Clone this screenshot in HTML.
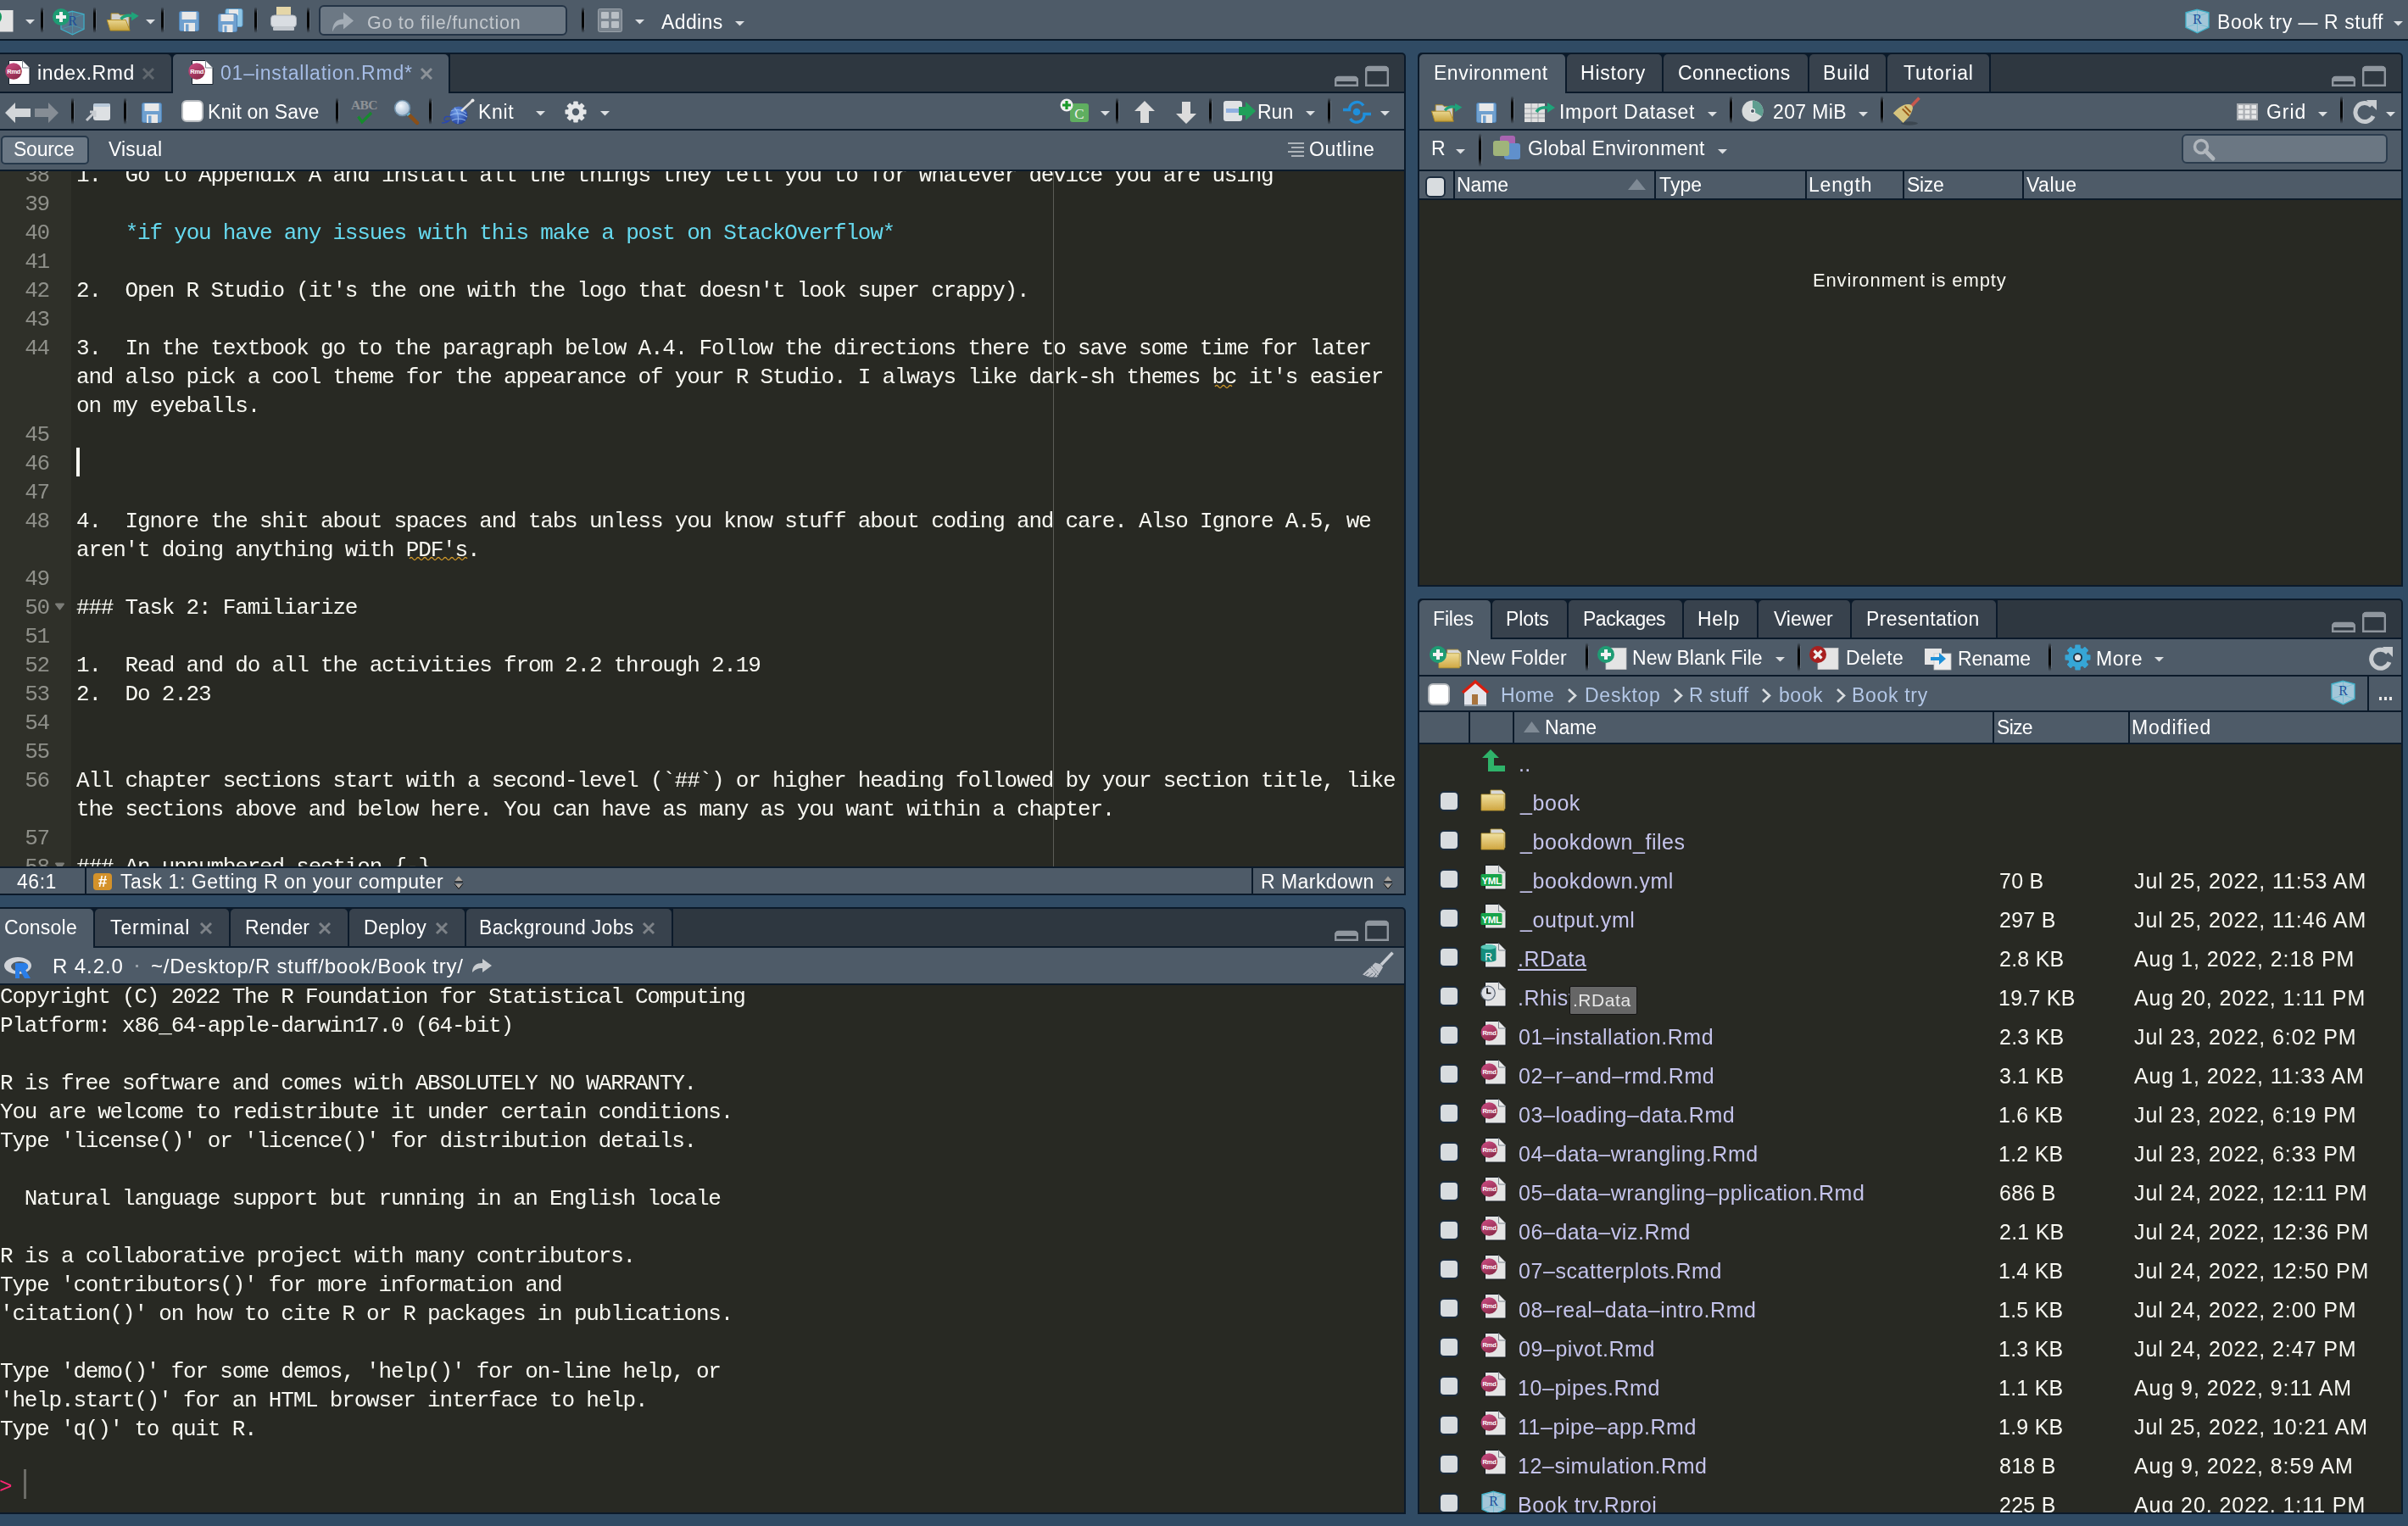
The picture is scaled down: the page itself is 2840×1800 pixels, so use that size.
<!DOCTYPE html>
<html><head><meta charset="utf-8"><style>
html,body{margin:0;padding:0}
body{width:2840px;height:1800px;position:relative;overflow:hidden;background:#304b64;font-family:"Liberation Sans",sans-serif}
.a{position:absolute}
svg.a{overflow:visible}
.t{position:absolute;white-space:pre;line-height:40px;font-family:"Liberation Sans",sans-serif;will-change:transform}
.m{position:absolute;white-space:pre;font-family:"Liberation Mono",monospace;font-size:26px;line-height:34px;letter-spacing:-1.2px;will-change:transform}
</style></head><body>
<svg width="0" height="0" style="position:absolute"><defs><linearGradient id="grmd" x1="0" y1="0" x2=".6" y2="1"><stop offset="0" stop-color="#cf4e86"/><stop offset="1" stop-color="#8e2c4c"/></linearGradient><linearGradient id="gfld" x1="0" y1="0" x2="0" y2="1"><stop offset="0" stop-color="#efe0a0"/><stop offset="1" stop-color="#d0a640"/></linearGradient></defs></svg>
<div class="a" style="left:0px;top:0px;width:2840px;height:46px;background:#4e5b68;"></div>
<div class="a" style="left:0px;top:46px;width:2840px;height:2px;background:#0b1a2a;"></div>
<div class="a" style="left:0px;top:62px;width:1658px;height:994px;background:#0b1a2a;border-top-right-radius:5px"></div>
<div class="a" style="left:531px;top:64px;width:1125px;height:44px;background:#2e3740;border-top-right-radius:3px"></div>
<div class="a" style="left:0px;top:64px;width:202px;height:44px;background:#38424d;border-top-right-radius:5px"></div>
<div class="a" style="left:204px;top:64px;width:325px;height:46px;background:#4e5b68;border-top-left-radius:5px;border-top-right-radius:5px"></div>
<div class="a" style="left:0px;top:110px;width:1656px;height:42px;background:#4e5b68;"></div>
<div class="a" style="left:0px;top:154px;width:1656px;height:46px;background:#4e5b68;"></div>
<div class="a" style="left:0px;top:202px;width:84px;height:820px;background:#2f3029;"></div>
<div class="a" style="left:84px;top:202px;width:1572px;height:820px;background:#282923;"></div>
<div class="a" style="left:0px;top:1024px;width:1656px;height:30px;background:#4e5b68;"></div>
<div class="a" style="left:100px;top:1024px;width:2px;height:30px;background:#0b1a2a;"></div>
<div class="a" style="left:1476px;top:1024px;width:2px;height:30px;background:#0b1a2a;"></div>
<div class="a" style="left:0px;top:1070px;width:1658px;height:716px;background:#0b1a2a;border-top-right-radius:5px"></div>
<div class="a" style="left:794px;top:1072px;width:862px;height:44px;background:#2e3740;border-top-right-radius:3px"></div>
<div class="a" style="left:0px;top:1072px;width:110px;height:46px;background:#4e5b68;border-top-right-radius:5px"></div>
<div class="a" style="left:112px;top:1072px;width:158px;height:44px;background:#38424d;border-top-left-radius:5px;border-top-right-radius:5px"></div>
<div class="a" style="left:272px;top:1072px;width:138px;height:44px;background:#38424d;border-top-left-radius:5px;border-top-right-radius:5px"></div>
<div class="a" style="left:412px;top:1072px;width:136px;height:44px;background:#38424d;border-top-left-radius:5px;border-top-right-radius:5px"></div>
<div class="a" style="left:550px;top:1072px;width:242px;height:44px;background:#38424d;border-top-left-radius:5px;border-top-right-radius:5px"></div>
<div class="a" style="left:0px;top:1118px;width:1656px;height:42px;background:#4e5b68;"></div>
<div class="a" style="left:0px;top:1162px;width:1656px;height:622px;background:#282923;"></div>
<div class="a" style="left:1672px;top:62px;width:1162px;height:630px;background:#0b1a2a;border-top-left-radius:5px;border-top-right-radius:5px"></div>
<div class="a" style="left:2348px;top:64px;width:484px;height:44px;background:#2e3740;border-top-right-radius:3px"></div>
<div class="a" style="left:1674px;top:64px;width:172px;height:46px;background:#4e5b68;border-top-left-radius:5px;border-top-right-radius:5px"></div>
<div class="a" style="left:1848px;top:64px;width:112px;height:44px;background:#38424d;border-top-left-radius:5px;border-top-right-radius:5px"></div>
<div class="a" style="left:1962px;top:64px;width:170px;height:44px;background:#38424d;border-top-left-radius:5px;border-top-right-radius:5px"></div>
<div class="a" style="left:2134px;top:64px;width:90px;height:44px;background:#38424d;border-top-left-radius:5px;border-top-right-radius:5px"></div>
<div class="a" style="left:2226px;top:64px;width:120px;height:44px;background:#38424d;border-top-left-radius:5px;border-top-right-radius:5px"></div>
<div class="a" style="left:1674px;top:110px;width:1158px;height:42px;background:#4e5b68;"></div>
<div class="a" style="left:1674px;top:154px;width:1158px;height:46px;background:#4e5b68;"></div>
<div class="a" style="left:1674px;top:202px;width:1158px;height:32px;background:#4e5b68;"></div>
<div class="a" style="left:1714px;top:202px;width:2px;height:32px;background:#0b1a2a;"></div>
<div class="a" style="left:1951px;top:202px;width:2px;height:32px;background:#0b1a2a;"></div>
<div class="a" style="left:2129px;top:202px;width:2px;height:32px;background:#0b1a2a;"></div>
<div class="a" style="left:2244px;top:202px;width:2px;height:32px;background:#0b1a2a;"></div>
<div class="a" style="left:2385px;top:202px;width:2px;height:32px;background:#0b1a2a;"></div>
<div class="a" style="left:1674px;top:236px;width:1158px;height:454px;background:#282923;"></div>
<div class="a" style="left:1672px;top:706px;width:1162px;height:1080px;background:#0b1a2a;border-top-left-radius:5px;border-top-right-radius:5px"></div>
<div class="a" style="left:2356px;top:708px;width:476px;height:44px;background:#2e3740;border-top-right-radius:3px"></div>
<div class="a" style="left:1674px;top:708px;width:84px;height:46px;background:#4e5b68;border-top-left-radius:5px;border-top-right-radius:5px"></div>
<div class="a" style="left:1760px;top:708px;width:88px;height:44px;background:#38424d;border-top-left-radius:5px;border-top-right-radius:5px"></div>
<div class="a" style="left:1850px;top:708px;width:134px;height:44px;background:#38424d;border-top-left-radius:5px;border-top-right-radius:5px"></div>
<div class="a" style="left:1986px;top:708px;width:86px;height:44px;background:#38424d;border-top-left-radius:5px;border-top-right-radius:5px"></div>
<div class="a" style="left:2074px;top:708px;width:108px;height:44px;background:#38424d;border-top-left-radius:5px;border-top-right-radius:5px"></div>
<div class="a" style="left:2184px;top:708px;width:170px;height:44px;background:#38424d;border-top-left-radius:5px;border-top-right-radius:5px"></div>
<div class="a" style="left:1674px;top:754px;width:1158px;height:42px;background:#4e5b68;"></div>
<div class="a" style="left:1674px;top:798px;width:1158px;height:40px;background:#4e5b68;"></div>
<div class="a" style="left:2792px;top:798px;width:2px;height:40px;background:#0b1a2a;"></div>
<div class="a" style="left:1674px;top:840px;width:1158px;height:36px;background:#4e5b68;"></div>
<div class="a" style="left:1732px;top:840px;width:2px;height:36px;background:#0b1a2a;"></div>
<div class="a" style="left:1784px;top:840px;width:2px;height:36px;background:#0b1a2a;"></div>
<div class="a" style="left:2350px;top:840px;width:2px;height:36px;background:#0b1a2a;"></div>
<div class="a" style="left:2510px;top:840px;width:2px;height:36px;background:#0b1a2a;"></div>
<div class="a" style="left:1674px;top:878px;width:1158px;height:906px;background:#282923;"></div>
<svg class="a" style="left:0px;top:12px;" width="16" height="26" viewBox="0 0 16 26"><rect x="-8" y="0" width="23.5" height="25.5" fill="#e4e4e4"/><circle cx="-7" cy="8" r="9" fill="#12955c"/></svg>
<svg class="a" style="left:30px;top:23px;" width="11" height="6" viewBox="0 0 11 6"><path d="M0 0H11L5.5 5.5Z" fill="#dcdfe2"/></svg>
<div class="a" style="left:48px;top:8px;width:3px;height:31px;background:linear-gradient(180deg,rgba(0,0,0,0),rgba(0,0,0,.95) 25%,rgba(0,0,0,.95) 75%,rgba(0,0,0,0));border-radius:2px"></div>
<div class="a" style="left:51px;top:12px;width:1px;height:23px;background:rgba(255,255,255,.12);"></div>
<svg class="a" style="left:71px;top:12px;" width="29" height="30" viewBox="0 0 30 30"><path d="M15 0.8L29 4.5v18L15 29.2 1 22.5v-18z" fill="#5d8aa8" fill-opacity=".55" stroke="#3fb0c8" stroke-width="1.3"/><path d="M15 0.8v28.4M1 4.5l14 4.5 14-4.5M1 22.5l14-4.5 14 4.5" stroke="#3fb0c8" stroke-width=".8" fill="none" opacity=".55"/><text x="15" y="18.6" font-family="Liberation Serif" font-size="16.5" fill="#1f4f9a" text-anchor="middle">R</text></svg>
<svg class="a" style="left:62px;top:10px;" width="20" height="20" viewBox="0 0 20 20"><circle cx="10" cy="10" r="10" fill="#1f9c74"/><path d="M10 4v12M4 10h12" stroke="#f2f2f2" stroke-width="4"/></svg>
<div class="a" style="left:110px;top:8px;width:3px;height:31px;background:linear-gradient(180deg,rgba(0,0,0,0),rgba(0,0,0,.95) 25%,rgba(0,0,0,.95) 75%,rgba(0,0,0,0));border-radius:2px"></div>
<div class="a" style="left:113px;top:12px;width:1px;height:23px;background:rgba(255,255,255,.12);"></div>
<svg class="a" style="left:124px;top:13px;" width="41" height="25" viewBox="0 0 40 26"><defs><linearGradient id="gf" x1="0" y1="0" x2="0" y2="1"><stop offset="0" stop-color="#e9d690"/><stop offset="1" stop-color="#c9a540"/></linearGradient></defs><path d="M6 3h9l2 2h11v18H6z" fill="#d0d0d0" stroke="#b08a20" stroke-width="1"/><path d="M1 11h23l5 13H5z" fill="url(#gf)" stroke="#b08a20" stroke-width="1"/><path d="M18 10c4-5 10-5 14-4" fill="none" stroke="#1fa37a" stroke-width="3.5"/><path d="M31 1l9 5-9 6z" fill="#1fa37a"/></svg>
<svg class="a" style="left:172px;top:23px;" width="11" height="6" viewBox="0 0 11 6"><path d="M0 0H11L5.5 5.5Z" fill="#dcdfe2"/></svg>
<div class="a" style="left:190px;top:8px;width:3px;height:31px;background:linear-gradient(180deg,rgba(0,0,0,0),rgba(0,0,0,.95) 25%,rgba(0,0,0,.95) 75%,rgba(0,0,0,0));border-radius:2px"></div>
<div class="a" style="left:193px;top:12px;width:1px;height:23px;background:rgba(255,255,255,.12);"></div>
<svg class="a" style="left:211px;top:13px;" width="24" height="24" viewBox="0 0 24 24"><rect x="0.5" y="0.5" width="23" height="23" rx="2" fill="#6fa0cf" stroke="#4f84b8"/><rect x="3.5" y="1" width="17" height="9" fill="#e8e8e8"/><rect x="6" y="14" width="13" height="10" fill="#e8e8e8"/><rect x="8" y="15.5" width="3.5" height="8.5" fill="#6fa0cf"/></svg>
<svg class="a" style="left:257px;top:10px;" width="30" height="28" viewBox="0 0 30 28"><rect x="9" y="0.5" width="20" height="21" rx="2" fill="#8fc6e6" stroke="#5a9ccc"/><rect x="13" y="1" width="11" height="7" fill="#e8e8e8"/><rect x="0.5" y="6.5" width="22" height="21" rx="2" fill="#6fa0cf" stroke="#4f84b8"/><rect x="3.5" y="7" width="15" height="8" fill="#e8e8e8"/><rect x="5.5" y="19" width="12" height="9" fill="#e8e8e8"/><rect x="7.5" y="20.5" width="3" height="7.5" fill="#6fa0cf"/></svg>
<div class="a" style="left:300px;top:8px;width:3px;height:31px;background:linear-gradient(180deg,rgba(0,0,0,0),rgba(0,0,0,.95) 25%,rgba(0,0,0,.95) 75%,rgba(0,0,0,0));border-radius:2px"></div>
<div class="a" style="left:303px;top:12px;width:1px;height:23px;background:rgba(255,255,255,.12);"></div>
<svg class="a" style="left:319px;top:8px;" width="31" height="29" viewBox="0 0 31 29"><rect x="7" y="0" width="17" height="12" fill="#e4d6a8"/><rect x="0.5" y="10" width="30" height="14" rx="4" fill="#d9dde2" stroke="#aab0b8"/><rect x="3" y="24" width="25" height="4" rx="1" fill="#c4c9cf"/></svg>
<div class="a" style="left:362px;top:8px;width:3px;height:31px;background:linear-gradient(180deg,rgba(0,0,0,0),rgba(0,0,0,.95) 25%,rgba(0,0,0,.95) 75%,rgba(0,0,0,0));border-radius:2px"></div>
<div class="a" style="left:365px;top:12px;width:1px;height:23px;background:rgba(255,255,255,.12);"></div>
<div class="a" style="left:376px;top:6px;width:293px;height:36px;background:#6c7884;border:2px solid #243446;border-radius:6px;box-sizing:border-box"></div>
<svg class="a" style="left:391px;top:12px;" width="26" height="26" viewBox="0 0 26 25"><path d="M1 25c0-10 5-15 13-15V2l12 10-12 10v-6c-7 0-10 3-13 9z" fill="#a3acb5"/></svg>
<div class="a" style="left:686px;top:8px;width:3px;height:31px;background:linear-gradient(180deg,rgba(0,0,0,0),rgba(0,0,0,.95) 25%,rgba(0,0,0,.95) 75%,rgba(0,0,0,0));border-radius:2px"></div>
<div class="a" style="left:689px;top:12px;width:1px;height:23px;background:rgba(255,255,255,.12);"></div>
<svg class="a" style="left:705px;top:10px;" width="29" height="28" viewBox="0 0 29 28"><rect x="0.5" y="0.5" width="28" height="27" rx="2" fill="#7a848e" stroke="#9aa2aa"/><rect x="4" y="4" width="9" height="8" rx="1" fill="#b9bfc5"/><rect x="16" y="4" width="9" height="8" rx="1" fill="#b9bfc5"/><rect x="4" y="15" width="9" height="8" rx="1" fill="#b9bfc5"/><rect x="16" y="15" width="9" height="8" rx="1" fill="#b9bfc5"/></svg>
<svg class="a" style="left:749px;top:23px;" width="11" height="6" viewBox="0 0 11 6"><path d="M0 0H11L5.5 5.5Z" fill="#dcdfe2"/></svg>
<svg class="a" style="left:867px;top:25px;" width="11" height="6" viewBox="0 0 11 6"><path d="M0 0H11L5.5 5.5Z" fill="#dcdfe2"/></svg>
<svg class="a" style="left:2577px;top:10px;" width="29" height="30" viewBox="0 0 30 30"><path d="M15 0.8L29 4.5v18L15 29.2 1 22.5v-18z" fill="#a3c6d8" fill-opacity="1" stroke="#3fb0c8" stroke-width="1.3"/><path d="M15 0.8v28.4M1 4.5l14 4.5 14-4.5M1 22.5l14-4.5 14 4.5" stroke="#3fb0c8" stroke-width=".8" fill="none" opacity=".55"/><text x="15" y="18.6" font-family="Liberation Serif" font-size="16.5" fill="#1f4f9a" text-anchor="middle">R</text></svg>
<svg class="a" style="left:2823px;top:25px;" width="11" height="6" viewBox="0 0 11 6"><path d="M0 0H11L5.5 5.5Z" fill="#dcdfe2"/></svg>
<svg class="a" style="left:6px;top:71px;" width="31" height="30" viewBox="0 0 31 30"><path d="M4.5 0.5h16l8.5 8.5v19.5H4.5z" fill="#ffffff" stroke="#18222e" stroke-width="1"/><path d="M20.5 0.5v8.5h8.5" fill="#ffffff" stroke="#7d858e" stroke-width="1"/><circle cx="10" cy="13" r="9.8" fill="url(#grmd)"/><text x="10.2" y="15.6" font-family="Liberation Sans" font-size="7.6" font-weight="bold" fill="#fff" text-anchor="middle" letter-spacing="-.3">Rmd</text></svg>
<svg class="a" style="left:168px;top:80px;" width="14" height="14" viewBox="0 0 14 14"><path d="M1 1l12 12M13 1L1 13" stroke="#60676e" stroke-width="3"/></svg>
<svg class="a" style="left:222px;top:71px;" width="31" height="30" viewBox="0 0 31 30"><path d="M4.5 0.5h16l8.5 8.5v19.5H4.5z" fill="#ffffff" stroke="#18222e" stroke-width="1"/><path d="M20.5 0.5v8.5h8.5" fill="#ffffff" stroke="#7d858e" stroke-width="1"/><circle cx="10" cy="13" r="9.8" fill="url(#grmd)"/><text x="10.2" y="15.6" font-family="Liberation Sans" font-size="7.6" font-weight="bold" fill="#fff" text-anchor="middle" letter-spacing="-.3">Rmd</text></svg>
<svg class="a" style="left:496px;top:80px;" width="14" height="14" viewBox="0 0 14 14"><path d="M1 1l12 12M13 1L1 13" stroke="#8c9298" stroke-width="3"/></svg>
<svg class="a" style="left:1574px;top:78px;" width="64" height="24" viewBox="0 0 64 24"><path d="M1.2 16.5a3.5 3.5 0 0 1 3.5-3.5h18.6a3.5 3.5 0 0 1 3.5 3.5v6.3H1.2z" fill="none" stroke="#8f969e" stroke-width="2.4"/><path d="M0 16.5a4.5 4.5 0 0 1 4.5-4.5h19a4.5 4.5 0 0 1 4.5 4.5v1.5H0z" fill="#8f969e"/><path d="M37.2 4.5a3.5 3.5 0 0 1 3.5-3.5h18.6a3.5 3.5 0 0 1 3.5 3.5v18.3H37.2z" fill="none" stroke="#8f969e" stroke-width="2.4"/><path d="M36 4.5A4.5 4.5 0 0 1 40.5 0h19A4.5 4.5 0 0 1 64 4.5V6H36z" fill="#8f969e"/></svg>
<svg class="a" style="left:6px;top:121px;" width="30" height="24" viewBox="0 0 30 24"><path d="M0 12L12 0v7h18v10H12v7z" fill="#d3d6d9"/></svg>
<svg class="a" style="left:41px;top:121px;" width="28" height="24" viewBox="0 0 28 24"><path d="M28 12L16 0v7H0v10h16v7z" fill="#868d95"/></svg>
<div class="a" style="left:84px;top:115px;width:3px;height:32px;background:linear-gradient(180deg,rgba(0,0,0,0),rgba(0,0,0,.95) 25%,rgba(0,0,0,.95) 75%,rgba(0,0,0,0));border-radius:2px"></div>
<div class="a" style="left:87px;top:119px;width:1px;height:24px;background:rgba(255,255,255,.12);"></div>
<svg class="a" style="left:101px;top:121px;" width="30" height="22" viewBox="0 0 30 22"><rect x="9" y="1" width="20" height="20" rx="3" fill="#dde0e3"/><rect x="9" y="1" width="20" height="4" rx="2" fill="#b8c8d8"/><path d="M1 21L11 11M5 11h6v6" stroke="#c7cbd0" stroke-width="3" fill="none"/></svg>
<div class="a" style="left:146px;top:115px;width:3px;height:32px;background:linear-gradient(180deg,rgba(0,0,0,0),rgba(0,0,0,.95) 25%,rgba(0,0,0,.95) 75%,rgba(0,0,0,0));border-radius:2px"></div>
<div class="a" style="left:149px;top:119px;width:1px;height:24px;background:rgba(255,255,255,.12);"></div>
<svg class="a" style="left:167px;top:121px;" width="24" height="24" viewBox="0 0 24 24"><rect x="0.5" y="0.5" width="23" height="23" rx="2" fill="#6fa0cf" stroke="#4f84b8"/><rect x="3.5" y="1" width="17" height="9" fill="#e8e8e8"/><rect x="6" y="14" width="13" height="10" fill="#e8e8e8"/><rect x="8" y="15.5" width="3.5" height="8.5" fill="#6fa0cf"/></svg>
<div class="a" style="left:214px;top:118px;width:26px;height:26px;background:#ffffff;border:2px solid #b8bcc0;border-radius:6px;box-sizing:border-box"></div>
<div class="a" style="left:396px;top:115px;width:3px;height:32px;background:linear-gradient(180deg,rgba(0,0,0,0),rgba(0,0,0,.95) 25%,rgba(0,0,0,.95) 75%,rgba(0,0,0,0));border-radius:2px"></div>
<div class="a" style="left:399px;top:119px;width:1px;height:24px;background:rgba(255,255,255,.12);"></div>
<svg class="a" style="left:412px;top:116px;" width="35" height="31" viewBox="0 0 35 31"><text x="17.5" y="12.5" font-family="Liberation Serif" font-weight="bold" font-size="15.5" fill="#8e9296" text-anchor="middle" letter-spacing="-.6">ABC</text><path d="M10.5 21.5l4.5 6.5L26 17" stroke="#178a2e" stroke-width="3.2" fill="none"/></svg>
<svg class="a" style="left:464px;top:117px;" width="30" height="30" viewBox="0 0 30 30"><defs><radialGradient id="gmag" cx=".4" cy=".35" r=".7"><stop offset="0" stop-color="#f4f8fc"/><stop offset="1" stop-color="#9fb8d0"/></radialGradient></defs><path d="M17 17l11 11" stroke="#8a4f18" stroke-width="4.5" stroke-linecap="round"/><path d="M15.5 15.5l3 3" stroke="#58b8d8" stroke-width="4.5"/><circle cx="10.5" cy="10.5" r="9" fill="url(#gmag)" stroke="#6f8fa8" stroke-width="1.6"/></svg>
<div class="a" style="left:506px;top:115px;width:3px;height:32px;background:linear-gradient(180deg,rgba(0,0,0,0),rgba(0,0,0,.95) 25%,rgba(0,0,0,.95) 75%,rgba(0,0,0,0));border-radius:2px"></div>
<div class="a" style="left:509px;top:119px;width:1px;height:24px;background:rgba(255,255,255,.12);"></div>
<svg class="a" style="left:520px;top:116px;" width="40" height="31" viewBox="0 0 40 31"><defs><radialGradient id="gknit" cx=".4" cy=".35" r=".7"><stop offset="0" stop-color="#6c9ae8"/><stop offset="1" stop-color="#203e9a"/></radialGradient></defs><circle cx="21" cy="20" r="10.5" fill="url(#gknit)"/><path d="M12 15q9-4 18 3M11 20q10-5 20 2M13 26q8-4 16 0M16 11q6 6 4 19" stroke="#9cc0f4" stroke-width="1.1" fill="none" opacity=".8"/><path d="M24 15L37.5 2.5" stroke="#dcdcdc" stroke-width="2.6"/><circle cx="37.5" cy="2.5" r="2" fill="#e8e8e8"/><path d="M12 22q-7-2-8 2t6 2q-3 3-9 3" stroke="#2a48b0" stroke-width="1.3" fill="none"/></svg>
<svg class="a" style="left:632px;top:131px;" width="11" height="6" viewBox="0 0 11 6"><path d="M0 0H11L5.5 5.5Z" fill="#dcdfe2"/></svg>
<svg class="a" style="left:666px;top:119px;" width="26" height="26" viewBox="0 0 26 26"><rect x="10.2" y="0.5" width="5.6" height="25.0" rx="1" fill="#e4e6e8" transform="rotate(0 13 13)"/><rect x="10.2" y="0.5" width="5.6" height="25.0" rx="1" fill="#e4e6e8" transform="rotate(45 13 13)"/><rect x="10.2" y="0.5" width="5.6" height="25.0" rx="1" fill="#e4e6e8" transform="rotate(90 13 13)"/><rect x="10.2" y="0.5" width="5.6" height="25.0" rx="1" fill="#e4e6e8" transform="rotate(135 13 13)"/><circle cx="13" cy="13" r="9.5" fill="#e4e6e8"/><circle cx="13" cy="13" r="4.2" fill="#4e5b68"/></svg>
<svg class="a" style="left:708px;top:131px;" width="11" height="6" viewBox="0 0 11 6"><path d="M0 0H11L5.5 5.5Z" fill="#dcdfe2"/></svg>
<svg class="a" style="left:1250px;top:116px;" width="35" height="29" viewBox="0 0 35 29"><rect x="12" y="6" width="22" height="22" rx="3" fill="#5fae60"/><text x="23" y="24" font-family="Liberation Serif" font-size="17" fill="#f0f0f0" text-anchor="middle">C</text><circle cx="8" cy="8" r="7.5" fill="#f0f0f0"/><path d="M8 3v10M3 8h10" stroke="#1a9a2a" stroke-width="3.2"/></svg>
<svg class="a" style="left:1298px;top:131px;" width="11" height="6" viewBox="0 0 11 6"><path d="M0 0H11L5.5 5.5Z" fill="#dcdfe2"/></svg>
<div class="a" style="left:1316px;top:115px;width:3px;height:32px;background:linear-gradient(180deg,rgba(0,0,0,0),rgba(0,0,0,.95) 25%,rgba(0,0,0,.95) 75%,rgba(0,0,0,0));border-radius:2px"></div>
<div class="a" style="left:1319px;top:119px;width:1px;height:24px;background:rgba(255,255,255,.12);"></div>
<svg class="a" style="left:1338px;top:119px;" width="24" height="26" viewBox="0 0 24 26"><path d="M12 0L24 12h-7v14H7V12H0z" fill="#dcdcdc"/></svg>
<svg class="a" style="left:1387px;top:120px;" width="24" height="26" viewBox="0 0 24 26"><path d="M12 26L24 14h-7V0H7v14H0z" fill="#dcdcdc"/></svg>
<div class="a" style="left:1426px;top:115px;width:3px;height:32px;background:linear-gradient(180deg,rgba(0,0,0,0),rgba(0,0,0,.95) 25%,rgba(0,0,0,.95) 75%,rgba(0,0,0,0));border-radius:2px"></div>
<div class="a" style="left:1429px;top:119px;width:1px;height:24px;background:rgba(255,255,255,.12);"></div>
<svg class="a" style="left:1443px;top:119px;" width="38" height="24" viewBox="0 0 38 24"><rect x="0" y="0" width="22" height="24" rx="3" fill="#dfe2e5"/><rect x="3" y="9" width="15" height="5" fill="#8fb0e0"/><path d="M18 7h8V1l12 11-12 11v-6h-8z" fill="#1fa05a"/></svg>
<svg class="a" style="left:1540px;top:131px;" width="11" height="6" viewBox="0 0 11 6"><path d="M0 0H11L5.5 5.5Z" fill="#dcdfe2"/></svg>
<div class="a" style="left:1566px;top:115px;width:3px;height:32px;background:linear-gradient(180deg,rgba(0,0,0,0),rgba(0,0,0,.95) 25%,rgba(0,0,0,.95) 75%,rgba(0,0,0,0));border-radius:2px"></div>
<div class="a" style="left:1569px;top:119px;width:1px;height:24px;background:rgba(255,255,255,.12);"></div>
<svg class="a" style="left:1584px;top:119px;" width="33" height="26" viewBox="0 0 33 26"><circle cx="16" cy="13" r="4.3" fill="#1e8fdc"/><path d="M0 10.5H7.5A9 9 0 0 1 24 5.5M33 15.5H25A9 9 0 0 1 8.5 21" stroke="#1e8fdc" stroke-width="3.4" fill="none"/></svg>
<svg class="a" style="left:1628px;top:131px;" width="11" height="6" viewBox="0 0 11 6"><path d="M0 0H11L5.5 5.5Z" fill="#dcdfe2"/></svg>
<div class="a" style="left:1px;top:160px;width:104px;height:34px;background:#6a7784;border:2px solid #26384a;border-radius:5px;box-sizing:border-box"></div>
<svg class="a" style="left:1516px;top:168px;" width="23" height="18" viewBox="0 0 23 18"><path d="M3 1h19M7 6h15M3 11h19M7 16h15" stroke="#aeb4ba" stroke-width="2"/></svg>
<div class="a" style="left:0;top:202px;width:1656px;height:820px;overflow:hidden">
<div class="a" style="left:1242px;top:0;width:1px;height:820px;background:#5b5c56"></div>
<div class="m" style="left:0;top:-12px;width:58px;text-align:right;color:#8f908a">38</div>
<div class="m" style="left:90.0px;top:-12px;color:#f8f8f2">1.  Go to Appendix A and install all the things they tell you to for whatever device you are using</div>
<div class="m" style="left:0;top:22px;width:58px;text-align:right;color:#8f908a">39</div>
<div class="m" style="left:0;top:56px;width:58px;text-align:right;color:#8f908a">40</div>
<div class="m" style="left:90.0px;top:56px;color:#f8f8f2">    <span style="color:#66d9ef">*if you have any issues with this make a post on StackOverflow*</span></div>
<div class="m" style="left:0;top:90px;width:58px;text-align:right;color:#8f908a">41</div>
<div class="m" style="left:0;top:124px;width:58px;text-align:right;color:#8f908a">42</div>
<div class="m" style="left:90.0px;top:124px;color:#f8f8f2">2.  Open R Studio (it&#x27;s the one with the logo that doesn&#x27;t look super crappy).</div>
<div class="m" style="left:0;top:158px;width:58px;text-align:right;color:#8f908a">43</div>
<div class="m" style="left:0;top:192px;width:58px;text-align:right;color:#8f908a">44</div>
<div class="m" style="left:90.0px;top:192px;color:#f8f8f2">3.  In the textbook go to the paragraph below A.4. Follow the directions there to save some time for later</div>
<div class="m" style="left:90.0px;top:226px;color:#f8f8f2">and also pick a cool theme for the appearance of your R Studio. I always like dark-sh themes bc it&#x27;s easier</div>
<div class="m" style="left:90.0px;top:260px;color:#f8f8f2">on my eyeballs.</div>
<div class="m" style="left:0;top:294px;width:58px;text-align:right;color:#8f908a">45</div>
<div class="m" style="left:0;top:328px;width:58px;text-align:right;color:#8f908a">46</div>
<div class="m" style="left:0;top:362px;width:58px;text-align:right;color:#8f908a">47</div>
<div class="m" style="left:0;top:396px;width:58px;text-align:right;color:#8f908a">48</div>
<div class="m" style="left:90.0px;top:396px;color:#f8f8f2">4.  Ignore the shit about spaces and tabs unless you know stuff about coding and care. Also Ignore A.5, we</div>
<div class="m" style="left:90.0px;top:430px;color:#f8f8f2">aren&#x27;t doing anything with PDF&#x27;s.</div>
<div class="m" style="left:0;top:464px;width:58px;text-align:right;color:#8f908a">49</div>
<div class="m" style="left:0;top:498px;width:58px;text-align:right;color:#8f908a">50</div>
<div class="m" style="left:90.0px;top:498px;color:#f8f8f2">### Task 2: Familiarize</div>
<div class="m" style="left:0;top:532px;width:58px;text-align:right;color:#8f908a">51</div>
<div class="m" style="left:0;top:566px;width:58px;text-align:right;color:#8f908a">52</div>
<div class="m" style="left:90.0px;top:566px;color:#f8f8f2">1.  Read and do all the activities from 2.2 through 2.19</div>
<div class="m" style="left:0;top:600px;width:58px;text-align:right;color:#8f908a">53</div>
<div class="m" style="left:90.0px;top:600px;color:#f8f8f2">2.  Do 2.23</div>
<div class="m" style="left:0;top:634px;width:58px;text-align:right;color:#8f908a">54</div>
<div class="m" style="left:0;top:668px;width:58px;text-align:right;color:#8f908a">55</div>
<div class="m" style="left:0;top:702px;width:58px;text-align:right;color:#8f908a">56</div>
<div class="m" style="left:90.0px;top:702px;color:#f8f8f2">All chapter sections start with a second-level (`##`) or higher heading followed by your section title, like</div>
<div class="m" style="left:90.0px;top:736px;color:#f8f8f2">the sections above and below here. You can have as many as you want within a chapter.</div>
<div class="m" style="left:0;top:770px;width:58px;text-align:right;color:#8f908a">57</div>
<div class="m" style="left:0;top:804px;width:58px;text-align:right;color:#8f908a">58</div>
<div class="m" style="left:90.0px;top:804px;color:#f8f8f2">### An unnumbered section {-}</div>
<svg class="a" style="left:65px;top:509px" width="11" height="9"><path d="M1 0.5h9a1 1 0 0 1 .8 1.6L6.3 8a1 1 0 0 1-1.6 0L.2 2.1A1 1 0 0 1 1 .5z" fill="#7c7d78"/></svg>
<svg class="a" style="left:65px;top:815px" width="11" height="9"><path d="M1 0.5h9a1 1 0 0 1 .8 1.6L6.3 8a1 1 0 0 1-1.6 0L.2 2.1A1 1 0 0 1 1 .5z" fill="#7c7d78"/></svg>
<div class="a" style="left:90px;top:326px;width:4px;height:34px;background:#f8f8f2"></div>
<svg class="a" style="left:1433px;top:251px" width="23" height="6"><path d="M0 3 q2 -3 4 0 q2 3 4 0 q2 -3 4 0 q2 3 4 0 q2 -3 4 0" stroke="#d29a2a" stroke-width="1.3" fill="none"/></svg>
<svg class="a" style="left:483px;top:454px" width="68" height="6"><path d="M0 3 q2 -3 4 0 q2 3 4 0 q2 -3 4 0 q2 3 4 0 q2 -3 4 0 q2 3 4 0 q2 -3 4 0 q2 3 4 0 q2 -3 4 0 q2 3 4 0 q2 -3 4 0 q2 3 4 0 q2 -3 4 0 q2 3 4 0 q2 -3 4 0 q2 3 4 0 q2 -3 4 0" stroke="#d29a2a" stroke-width="1.3" fill="none"/></svg>
</div>
<div class="a" style="left:110px;top:1030px;width:22px;height:20px;background:#d4922a;border-radius:4px"></div>
<div class="a" style="left:110px;top:1030px;width:22px;height:20px;line-height:20px;text-align:center;font-size:19px;color:#fff;font-weight:bold;font-family:Liberation Sans;will-change:transform">#</div>
<svg class="a" style="left:535px;top:1032px;" width="12" height="18" viewBox="0 0 12 18"><path d="M1 7.5L6 1.5l5 6zM1 10.5l5 6 5-6z" fill="#aaa59f"/><path d="M1 8h10" stroke="#000" stroke-width="1"/><path d="M1 10.5l5 6 5-6" stroke="#000" stroke-width=".9" fill="none"/></svg>
<svg class="a" style="left:1631px;top:1032px;" width="12" height="18" viewBox="0 0 12 18"><path d="M1 7.5L6 1.5l5 6zM1 10.5l5 6 5-6z" fill="#aaa59f"/><path d="M1 8h10" stroke="#000" stroke-width="1"/><path d="M1 10.5l5 6 5-6" stroke="#000" stroke-width=".9" fill="none"/></svg>
<svg class="a" style="left:236px;top:1088px;" width="14" height="14" viewBox="0 0 14 14"><path d="M1 1l12 12M13 1L1 13" stroke="#7d8288" stroke-width="3"/></svg>
<svg class="a" style="left:376px;top:1088px;" width="14" height="14" viewBox="0 0 14 14"><path d="M1 1l12 12M13 1L1 13" stroke="#7d8288" stroke-width="3"/></svg>
<svg class="a" style="left:514px;top:1088px;" width="14" height="14" viewBox="0 0 14 14"><path d="M1 1l12 12M13 1L1 13" stroke="#7d8288" stroke-width="3"/></svg>
<svg class="a" style="left:758px;top:1088px;" width="14" height="14" viewBox="0 0 14 14"><path d="M1 1l12 12M13 1L1 13" stroke="#7d8288" stroke-width="3"/></svg>
<svg class="a" style="left:1574px;top:1086px;" width="64" height="24" viewBox="0 0 64 24"><path d="M1.2 16.5a3.5 3.5 0 0 1 3.5-3.5h18.6a3.5 3.5 0 0 1 3.5 3.5v6.3H1.2z" fill="none" stroke="#8f969e" stroke-width="2.4"/><path d="M0 16.5a4.5 4.5 0 0 1 4.5-4.5h19a4.5 4.5 0 0 1 4.5 4.5v1.5H0z" fill="#8f969e"/><path d="M37.2 4.5a3.5 3.5 0 0 1 3.5-3.5h18.6a3.5 3.5 0 0 1 3.5 3.5v18.3H37.2z" fill="none" stroke="#8f969e" stroke-width="2.4"/><path d="M36 4.5A4.5 4.5 0 0 1 40.5 0h19A4.5 4.5 0 0 1 64 4.5V6H36z" fill="#8f969e"/></svg>
<svg class="a" style="left:4px;top:1128px;" width="34" height="27" viewBox="0 0 34 27"><ellipse cx="17" cy="11" rx="16" ry="10" fill="#d0d3d8"/><ellipse cx="19" cy="12" rx="10" ry="6" fill="#4e5b68"/><path d="M14 8h11c5 0 6 7 1 8l6 10h-7l-5-9h-1v9h-5z" fill="#2a7ee8"/></svg>
<div class="a" style="left:160px;top:1138px;width:3px;height:3px;background:#9aa2aa"></div>
<svg class="a" style="left:557px;top:1130px;" width="23" height="17" viewBox="0 0 23 17"><path d="M0 17c0-8 5-11 12-11V1l11 8-11 8v-5c-6 0-9 2-12 5z" fill="#c8ccd0"/></svg>
<svg class="a" style="left:1605px;top:1121px;" width="40" height="34" viewBox="0 0 40 34"><path d="M37.5 2.8L24 17" stroke="#c9cdd3" stroke-width="3.6"/><path d="M2 28.5L17 14.5 23.5 16.5 26 20 19 31.5H10z" fill="#bec2c9"/><path d="M13 18l9 10M11 20l9 10" stroke="#4e5b68" stroke-width="1" stroke-dasharray="1.2 1.2"/><path d="M5 29l4-3M9 31l5-4M14 32l4-4" stroke="#4e5b68" stroke-width=".9"/></svg>
<div class="a" style="left:0;top:1162px;width:1656px;height:622px;overflow:hidden">
<div class="m" style="left:0px;top:-3px;color:#f8f8f2">Copyright (C) 2022 The R Foundation for Statistical Computing</div>
<div class="m" style="left:0px;top:31px;color:#f8f8f2">Platform: x86_64-apple-darwin17.0 (64-bit)</div>
<div class="m" style="left:0px;top:99px;color:#f8f8f2">R is free software and comes with ABSOLUTELY NO WARRANTY.</div>
<div class="m" style="left:0px;top:133px;color:#f8f8f2">You are welcome to redistribute it under certain conditions.</div>
<div class="m" style="left:0px;top:167px;color:#f8f8f2">Type &#x27;license()&#x27; or &#x27;licence()&#x27; for distribution details.</div>
<div class="m" style="left:0px;top:235px;color:#f8f8f2">  Natural language support but running in an English locale</div>
<div class="m" style="left:0px;top:303px;color:#f8f8f2">R is a collaborative project with many contributors.</div>
<div class="m" style="left:0px;top:337px;color:#f8f8f2">Type &#x27;contributors()&#x27; for more information and</div>
<div class="m" style="left:0px;top:371px;color:#f8f8f2">&#x27;citation()&#x27; on how to cite R or R packages in publications.</div>
<div class="m" style="left:0px;top:439px;color:#f8f8f2">Type &#x27;demo()&#x27; for some demos, &#x27;help()&#x27; for on-line help, or</div>
<div class="m" style="left:0px;top:473px;color:#f8f8f2">&#x27;help.start()&#x27; for an HTML browser interface to help.</div>
<div class="m" style="left:0px;top:507px;color:#f8f8f2">Type &#x27;q()&#x27; to quit R.</div>
<div class="m" style="left:-1px;top:575px;color:#f92672">&gt;</div>
<div class="a" style="left:28px;top:571px;width:3px;height:35px;background:#6b6b66"></div>
</div>
<svg class="a" style="left:2750px;top:78px;" width="64" height="24" viewBox="0 0 64 24"><path d="M1.2 16.5a3.5 3.5 0 0 1 3.5-3.5h18.6a3.5 3.5 0 0 1 3.5 3.5v6.3H1.2z" fill="none" stroke="#8f969e" stroke-width="2.4"/><path d="M0 16.5a4.5 4.5 0 0 1 4.5-4.5h19a4.5 4.5 0 0 1 4.5 4.5v1.5H0z" fill="#8f969e"/><path d="M37.2 4.5a3.5 3.5 0 0 1 3.5-3.5h18.6a3.5 3.5 0 0 1 3.5 3.5v18.3H37.2z" fill="none" stroke="#8f969e" stroke-width="2.4"/><path d="M36 4.5A4.5 4.5 0 0 1 40.5 0h19A4.5 4.5 0 0 1 64 4.5V6H36z" fill="#8f969e"/></svg>
<svg class="a" style="left:1686px;top:121px;" width="40" height="24" viewBox="0 0 40 26"><defs><linearGradient id="gf" x1="0" y1="0" x2="0" y2="1"><stop offset="0" stop-color="#e9d690"/><stop offset="1" stop-color="#c9a540"/></linearGradient></defs><path d="M6 3h9l2 2h11v18H6z" fill="#d0d0d0" stroke="#b08a20" stroke-width="1"/><path d="M1 11h23l5 13H5z" fill="url(#gf)" stroke="#b08a20" stroke-width="1"/><path d="M18 10c4-5 10-5 14-4" fill="none" stroke="#1fa37a" stroke-width="3.5"/><path d="M31 1l9 5-9 6z" fill="#1fa37a"/></svg>
<svg class="a" style="left:1741px;top:121px;" width="24" height="24" viewBox="0 0 24 24"><rect x="0.5" y="0.5" width="23" height="23" rx="2" fill="#6fa0cf" stroke="#4f84b8"/><rect x="3.5" y="1" width="17" height="9" fill="#e8e8e8"/><rect x="6" y="14" width="13" height="10" fill="#e8e8e8"/><rect x="8" y="15.5" width="3.5" height="8.5" fill="#6fa0cf"/></svg>
<div class="a" style="left:1782px;top:113px;width:3px;height:33px;background:linear-gradient(180deg,rgba(0,0,0,0),rgba(0,0,0,.95) 25%,rgba(0,0,0,.95) 75%,rgba(0,0,0,0));border-radius:2px"></div>
<div class="a" style="left:1785px;top:117px;width:1px;height:25px;background:rgba(255,255,255,.12);"></div>
<svg class="a" style="left:1798px;top:120px;" width="37" height="24" viewBox="0 0 37 24"><rect x="0" y="2" width="24" height="22" fill="#e0e0e0"/><path d="M0 8h24M0 14h24M0 19h24M8 2v22M16 2v22" stroke="#9aa0a6" stroke-width="1"/><path d="M14 12c3-5 8-6 14-5" fill="none" stroke="#1fa37a" stroke-width="3.5"/><path d="M27 1l9 6-9 6z" fill="#1fa37a"/></svg>
<svg class="a" style="left:2014px;top:132px;" width="11" height="6" viewBox="0 0 11 6"><path d="M0 0H11L5.5 5.5Z" fill="#dcdfe2"/></svg>
<div class="a" style="left:2040px;top:113px;width:3px;height:33px;background:linear-gradient(180deg,rgba(0,0,0,0),rgba(0,0,0,.95) 25%,rgba(0,0,0,.95) 75%,rgba(0,0,0,0));border-radius:2px"></div>
<div class="a" style="left:2043px;top:117px;width:1px;height:25px;background:rgba(255,255,255,.12);"></div>
<svg class="a" style="left:2054px;top:118px;" width="26" height="26" viewBox="0 0 26 26"><circle cx="13" cy="13" r="12.5" fill="#d8dcdc"/><path d="M13 13V0.5A12.5 12.5 0 0 1 23.83 19.25z" fill="#5f9e90"/><circle cx="13" cy="13" r="3.2" fill="#f0f0f0"/><circle cx="13" cy="13" r="2" fill="#4e5b68"/></svg>
<svg class="a" style="left:2192px;top:132px;" width="11" height="6" viewBox="0 0 11 6"><path d="M0 0H11L5.5 5.5Z" fill="#dcdfe2"/></svg>
<div class="a" style="left:2218px;top:113px;width:3px;height:33px;background:linear-gradient(180deg,rgba(0,0,0,0),rgba(0,0,0,.95) 25%,rgba(0,0,0,.95) 75%,rgba(0,0,0,0));border-radius:2px"></div>
<div class="a" style="left:2221px;top:117px;width:1px;height:25px;background:rgba(255,255,255,.12);"></div>
<svg class="a" style="left:2230px;top:110px;" width="36" height="38" viewBox="0 0 36 38"><ellipse cx="22" cy="35.5" rx="10" ry="2.2" fill="rgba(0,0,0,.22)"/><path d="M33.5 5.5L24.5 15" stroke="#c8584e" stroke-width="3.6"/><path d="M2.8 23.4C8 18 14 13.5 19.5 13C23 12.5 26.5 14.5 25.9 18C25 22 23 26 21 28.3L14.6 34.9C10 30 6 26.5 2.8 23.4Z" fill="#d6c47e"/><path d="M16.6 15.3l6.9 7.2M13.7 18.4l8 8.1" stroke="#9a5a18" stroke-width="1.9"/></svg>
<svg class="a" style="left:2638px;top:122px;" width="25" height="20" viewBox="0 0 25 20"><rect x="0" y="0" width="25" height="20" fill="#a9adb2"/><g fill="#e6e7e8"><rect x="2" y="2" width="5.5" height="4.3"/><rect x="9.7" y="2" width="5.6" height="4.3"/><rect x="17.5" y="2" width="5.5" height="4.3"/><rect x="2" y="7.9" width="5.5" height="4.3"/><rect x="9.7" y="7.9" width="5.6" height="4.3"/><rect x="17.5" y="7.9" width="5.5" height="4.3"/><rect x="2" y="13.7" width="5.5" height="4.3"/><rect x="9.7" y="13.7" width="5.6" height="4.3"/><rect x="17.5" y="13.7" width="5.5" height="4.3"/></g></svg>
<svg class="a" style="left:2734px;top:132px;" width="11" height="6" viewBox="0 0 11 6"><path d="M0 0H11L5.5 5.5Z" fill="#dcdfe2"/></svg>
<div class="a" style="left:2760px;top:113px;width:3px;height:33px;background:linear-gradient(180deg,rgba(0,0,0,0),rgba(0,0,0,.95) 25%,rgba(0,0,0,.95) 75%,rgba(0,0,0,0));border-radius:2px"></div>
<div class="a" style="left:2763px;top:117px;width:1px;height:25px;background:rgba(255,255,255,.12);"></div>
<svg class="a" style="left:2775px;top:117px;" width="28" height="30" viewBox="0 0 28 30"><path d="M22 8A11 11 0 1 0 24 20" stroke="#c8ccd0" stroke-width="5" fill="none"/><path d="M16 1h12v12z" fill="#c8ccd0"/></svg>
<svg class="a" style="left:2814px;top:132px;" width="11" height="6" viewBox="0 0 11 6"><path d="M0 0H11L5.5 5.5Z" fill="#dcdfe2"/></svg>
<svg class="a" style="left:1717px;top:176px;" width="11" height="6" viewBox="0 0 11 6"><path d="M0 0H11L5.5 5.5Z" fill="#dcdfe2"/></svg>
<div class="a" style="left:1744px;top:157px;width:3px;height:40px;background:linear-gradient(180deg,rgba(0,0,0,0),rgba(0,0,0,.95) 25%,rgba(0,0,0,.95) 75%,rgba(0,0,0,0));border-radius:2px"></div>
<div class="a" style="left:1747px;top:161px;width:1px;height:32px;background:rgba(255,255,255,.12);"></div>
<svg class="a" style="left:1761px;top:159px;" width="32" height="29" viewBox="0 0 32 29"><rect x="8" y="1" width="18" height="18" rx="3" fill="#a864b0"/><rect x="13" y="10" width="19" height="19" rx="3" fill="#6090cc"/><rect x="0" y="7" width="19" height="18" rx="3" fill="#a0b47a"/></svg>
<svg class="a" style="left:2026px;top:176px;" width="11" height="6" viewBox="0 0 11 6"><path d="M0 0H11L5.5 5.5Z" fill="#dcdfe2"/></svg>
<div class="a" style="left:2573px;top:158px;width:243px;height:35px;background:#6b7783;border:2px solid #2b3c4e;border-radius:6px;box-sizing:border-box"></div>
<svg class="a" style="left:2586px;top:163px;" width="27" height="27" viewBox="0 0 27 27"><circle cx="10" cy="10" r="7.5" stroke="#b0b6bc" stroke-width="3.5" fill="none"/><path d="M15 15l9 9" stroke="#b0b6bc" stroke-width="5" stroke-linecap="round"/></svg>
<div class="a" style="left:1681px;top:208px;width:24px;height:25px;background:#d8dcdf;border:2px solid #1d2d3e;border-radius:6px;box-sizing:border-box"></div>
<svg class="a" style="left:1920px;top:211px;" width="21" height="13" viewBox="0 0 21 13"><path d="M0 13L10.5 0 21 13z" fill="#7f8a95"/></svg>
<svg class="a" style="left:2750px;top:722px;" width="64" height="24" viewBox="0 0 64 24"><path d="M1.2 16.5a3.5 3.5 0 0 1 3.5-3.5h18.6a3.5 3.5 0 0 1 3.5 3.5v6.3H1.2z" fill="none" stroke="#8f969e" stroke-width="2.4"/><path d="M0 16.5a4.5 4.5 0 0 1 4.5-4.5h19a4.5 4.5 0 0 1 4.5 4.5v1.5H0z" fill="#8f969e"/><path d="M37.2 4.5a3.5 3.5 0 0 1 3.5-3.5h18.6a3.5 3.5 0 0 1 3.5 3.5v18.3H37.2z" fill="none" stroke="#8f969e" stroke-width="2.4"/><path d="M36 4.5A4.5 4.5 0 0 1 40.5 0h19A4.5 4.5 0 0 1 64 4.5V6H36z" fill="#8f969e"/></svg>
<svg class="a" style="left:1696px;top:764px;" width="28" height="26" viewBox="0 0 31 26"><defs><linearGradient id="gf2" x1="0" y1="0" x2="0" y2="1"><stop offset="0" stop-color="#eedd98"/><stop offset="1" stop-color="#d0a844"/></linearGradient></defs><path d="M12 1h14l4 4v18H12z" fill="#d8d8d8" stroke="#b8982e" stroke-width=".8"/><path d="M1 6h27v19H1z" fill="url(#gf2)" stroke="#b8982e" stroke-width=".8"/></svg>
<svg class="a" style="left:1686px;top:762px;" width="20" height="20" viewBox="0 0 20 20"><circle cx="10" cy="10" r="10" fill="#1f9c74"/><path d="M10 4v12M4 10h12" stroke="#f2f2f2" stroke-width="4"/></svg>
<div class="a" style="left:1870px;top:758px;width:3px;height:34px;background:linear-gradient(180deg,rgba(0,0,0,0),rgba(0,0,0,.95) 25%,rgba(0,0,0,.95) 75%,rgba(0,0,0,0));border-radius:2px"></div>
<div class="a" style="left:1873px;top:762px;width:1px;height:26px;background:rgba(255,255,255,.12);"></div>
<svg class="a" style="left:1894px;top:764px;" width="24" height="26" viewBox="0 0 24 25"><rect x="0" y="0" width="24" height="25" fill="#e4e4e4"/><rect x="0" y="0" width="24" height="25" fill="none" stroke="#c8c8c8" stroke-width=".8"/></svg>
<svg class="a" style="left:1884px;top:762px;" width="20" height="20" viewBox="0 0 20 20"><circle cx="10" cy="10" r="10" fill="#1f9c74"/><path d="M10 4v12M4 10h12" stroke="#f2f2f2" stroke-width="4"/></svg>
<svg class="a" style="left:2094px;top:775px;" width="11" height="6" viewBox="0 0 11 6"><path d="M0 0H11L5.5 5.5Z" fill="#dcdfe2"/></svg>
<div class="a" style="left:2120px;top:758px;width:3px;height:34px;background:linear-gradient(180deg,rgba(0,0,0,0),rgba(0,0,0,.95) 25%,rgba(0,0,0,.95) 75%,rgba(0,0,0,0));border-radius:2px"></div>
<div class="a" style="left:2123px;top:762px;width:1px;height:26px;background:rgba(255,255,255,.12);"></div>
<svg class="a" style="left:2144px;top:764px;" width="24" height="26" viewBox="0 0 24 25"><rect x="0" y="0" width="24" height="25" fill="#e4e4e4"/><rect x="0" y="0" width="24" height="25" fill="none" stroke="#c8c8c8" stroke-width=".8"/></svg>
<svg class="a" style="left:2134px;top:762px;" width="20" height="20" viewBox="0 0 20 20"><circle cx="10" cy="10" r="10" fill="#a82020"/><path d="M5.5 5.5l9 9M14.5 5.5l-9 9" stroke="#f0f0f0" stroke-width="3.2"/></svg>
<svg class="a" style="left:2270px;top:764px;" width="32" height="26" viewBox="0 0 32 26"><rect x="0" y="1" width="20" height="19" fill="#e6e6e6"/><rect x="11" y="7" width="20" height="19" fill="#eeeeee" stroke="#c9c9c9" stroke-width=".8"/><path d="M7 11h10V6l8 7-8 7v-5H7z" fill="#1e90d8"/></svg>
<div class="a" style="left:2416px;top:758px;width:3px;height:34px;background:linear-gradient(180deg,rgba(0,0,0,0),rgba(0,0,0,.95) 25%,rgba(0,0,0,.95) 75%,rgba(0,0,0,0));border-radius:2px"></div>
<div class="a" style="left:2419px;top:762px;width:1px;height:26px;background:rgba(255,255,255,.12);"></div>
<svg class="a" style="left:2435px;top:760px;" width="31" height="31" viewBox="0 0 31 31"><rect x="12.25" y="0.5" width="6.5" height="30" rx="1" fill="#36a6d6" transform="rotate(0 15.5 15.5)"/><rect x="12.25" y="0.5" width="6.5" height="30" rx="1" fill="#36a6d6" transform="rotate(45 15.5 15.5)"/><rect x="12.25" y="0.5" width="6.5" height="30" rx="1" fill="#36a6d6" transform="rotate(90 15.5 15.5)"/><rect x="12.25" y="0.5" width="6.5" height="30" rx="1" fill="#36a6d6" transform="rotate(135 15.5 15.5)"/><circle cx="15.5" cy="15.5" r="11.5" fill="#36a6d6"/><circle cx="15.5" cy="15.5" r="5.5" fill="#1d3344"/><circle cx="15.5" cy="15.5" r="3.6" fill="#dfe3e6"/></svg>
<svg class="a" style="left:2541px;top:775px;" width="11" height="6" viewBox="0 0 11 6"><path d="M0 0H11L5.5 5.5Z" fill="#dcdfe2"/></svg>
<svg class="a" style="left:2794px;top:762px;" width="28" height="29" viewBox="0 0 28 29"><path d="M22 8A11 11 0 1 0 24 19" stroke="#c8ccd0" stroke-width="5" fill="none"/><path d="M16 1h12v12z" fill="#c8ccd0"/></svg>
<div class="a" style="left:1684px;top:806px;width:26px;height:26px;background:#ffffff;border:2px solid #b4b8bc;border-radius:6px;box-sizing:border-box"></div>
<svg class="a" style="left:1723px;top:802px;" width="34" height="30" viewBox="0 0 34 30"><path d="M4 14L17 3l13 11v16H4z" fill="#e4e6ec"/><path d="M2 15L17 2l15 13" stroke="#d81e10" stroke-width="3.5" fill="none"/><rect x="13" y="17" width="7" height="13" fill="#a8743e"/><path d="M4 30h26" stroke="#9aa4ae" stroke-width="2"/></svg>
<svg class="a" style="left:1848px;top:812px;" width="12" height="17" viewBox="0 0 12 17"><path d="M2 1l8 7.5L2 16" stroke="#d8dcdf" stroke-width="2.6" fill="none"/></svg>
<svg class="a" style="left:1973px;top:812px;" width="12" height="17" viewBox="0 0 12 17"><path d="M2 1l8 7.5L2 16" stroke="#d8dcdf" stroke-width="2.6" fill="none"/></svg>
<svg class="a" style="left:2077px;top:812px;" width="12" height="17" viewBox="0 0 12 17"><path d="M2 1l8 7.5L2 16" stroke="#d8dcdf" stroke-width="2.6" fill="none"/></svg>
<svg class="a" style="left:2165px;top:812px;" width="12" height="17" viewBox="0 0 12 17"><path d="M2 1l8 7.5L2 16" stroke="#d8dcdf" stroke-width="2.6" fill="none"/></svg>
<svg class="a" style="left:2749px;top:802px;" width="29" height="30" viewBox="0 0 30 30"><path d="M15 0.8L29 4.5v18L15 29.2 1 22.5v-18z" fill="#a3c6d8" fill-opacity="1" stroke="#3fb0c8" stroke-width="1.3"/><path d="M15 0.8v28.4M1 4.5l14 4.5 14-4.5M1 22.5l14-4.5 14 4.5" stroke="#3fb0c8" stroke-width=".8" fill="none" opacity=".55"/><text x="15" y="18.6" font-family="Liberation Serif" font-size="16.5" fill="#1f4f9a" text-anchor="middle">R</text></svg>
<div class="a" style="left:2806px;top:822px;width:3px;height:4px;background:#e8e8e8;"></div>
<div class="a" style="left:2812px;top:822px;width:3px;height:4px;background:#e8e8e8;"></div>
<div class="a" style="left:2818px;top:822px;width:3px;height:4px;background:#e8e8e8;"></div>
<svg class="a" style="left:1797px;top:851px;" width="19" height="13" viewBox="0 0 19 13"><path d="M0 13L9.5 0 19 13z" fill="#7f8a95"/></svg>
<div class="a" style="left:1674px;top:878px;width:1158px;height:906px;overflow:hidden">
<svg class="a" style="left:74px;top:6px" width="27" height="26" viewBox="0 0 27 26"><path d="M10 0L20 10h-6v9h13v7H7V10H0z" fill="#2fb36a"/></svg>
<div class="a" style="left:23px;top:55px;width:24px;height:24px;background:#d8dcdf;border:2px solid #1d2d3e;border-radius:6px;box-sizing:border-box"></div>
<svg class="a" style="left:72px;top:53px" width="31" height="26" viewBox="0 0 31 26"><path d="M12 1h13l4 4v18H12z" fill="#d8d8d8" stroke="#b8982e" stroke-width=".8"/><path d="M1 6h27v19H1z" fill="url(#gfld)" stroke="#b8982e" stroke-width=".8"/></svg>
<div class="a" style="left:23px;top:101px;width:24px;height:24px;background:#d8dcdf;border:2px solid #1d2d3e;border-radius:6px;box-sizing:border-box"></div>
<svg class="a" style="left:72px;top:99px" width="31" height="26" viewBox="0 0 31 26"><path d="M12 1h13l4 4v18H12z" fill="#d8d8d8" stroke="#b8982e" stroke-width=".8"/><path d="M1 6h27v19H1z" fill="url(#gfld)" stroke="#b8982e" stroke-width=".8"/></svg>
<div class="a" style="left:23px;top:147px;width:24px;height:24px;background:#d8dcdf;border:2px solid #1d2d3e;border-radius:6px;box-sizing:border-box"></div>
<svg class="a" style="left:71.5px;top:142px" width="31" height="30" viewBox="0 0 31 30"><path d="M5.5 0.5h16l8.5 8.5v20H5.5z" fill="#e4e4e4" stroke="#141a20" stroke-width="1"/><path d="M21.5 0.5v8.5h8.5" fill="#e8e8e8" stroke="#7d858e" stroke-width="1"/><rect x="0.5" y="11" width="25" height="14" rx="1.5" fill="#17a34a"/><text x="13" y="22.6" font-family="Liberation Sans" font-weight="bold" font-size="11.5" fill="#fff" text-anchor="middle" letter-spacing="-.4">YML</text></svg>
<div class="a" style="left:23px;top:193px;width:24px;height:24px;background:#d8dcdf;border:2px solid #1d2d3e;border-radius:6px;box-sizing:border-box"></div>
<svg class="a" style="left:71.5px;top:188px" width="31" height="30" viewBox="0 0 31 30"><path d="M5.5 0.5h16l8.5 8.5v20H5.5z" fill="#e4e4e4" stroke="#141a20" stroke-width="1"/><path d="M21.5 0.5v8.5h8.5" fill="#e8e8e8" stroke="#7d858e" stroke-width="1"/><rect x="0.5" y="11" width="25" height="14" rx="1.5" fill="#17a34a"/><text x="13" y="22.6" font-family="Liberation Sans" font-weight="bold" font-size="11.5" fill="#fff" text-anchor="middle" letter-spacing="-.4">YML</text></svg>
<div class="a" style="left:23px;top:239px;width:24px;height:24px;background:#d8dcdf;border:2px solid #1d2d3e;border-radius:6px;box-sizing:border-box"></div>
<svg class="a" style="left:71.5px;top:234px" width="31" height="30" viewBox="0 0 31 30"><path d="M5.5 0.5h16l8.5 8.5v20H5.5z" fill="#e4e4e4" stroke="#141a20" stroke-width="1"/><path d="M21.5 0.5v8.5h8.5" fill="#e8e8e8" stroke="#7d858e" stroke-width="1"/><path d="M0.5 5c0-3.5 18-3.5 18 0v15c0 3.5-18 3.5-18 0z" fill="#148c7c"/><ellipse cx="9.5" cy="5" rx="9" ry="3" fill="#5cc8b8"/><text x="9.5" y="21" font-family="Liberation Sans" font-size="12" fill="#fff" text-anchor="middle">R</text></svg>
<div class="a" style="left:23px;top:285px;width:24px;height:24px;background:#d8dcdf;border:2px solid #1d2d3e;border-radius:6px;box-sizing:border-box"></div>
<svg class="a" style="left:71.5px;top:280px" width="31" height="30" viewBox="0 0 31 30"><path d="M5.5 0.5h16l8.5 8.5v20H5.5z" fill="#e4e4e4" stroke="#141a20" stroke-width="1"/><path d="M21.5 0.5v8.5h8.5" fill="#e8e8e8" stroke="#7d858e" stroke-width="1"/><circle cx="9" cy="13.5" r="8.3" fill="#dcdee4" stroke="#5d6878" stroke-width="1.2"/><path d="M8 7.5v6h4.5" stroke="#000" stroke-width="1.6" fill="none"/></svg>
<div class="a" style="left:23px;top:331px;width:24px;height:24px;background:#d8dcdf;border:2px solid #1d2d3e;border-radius:6px;box-sizing:border-box"></div>
<svg class="a" style="left:71.5px;top:326px" width="31" height="30" viewBox="0 0 31 30"><path d="M5.5 0.5h16l8.5 8.5v20H5.5z" fill="#e4e4e4" stroke="#141a20" stroke-width="1"/><path d="M21.5 0.5v8.5h8.5" fill="#e8e8e8" stroke="#7d858e" stroke-width="1"/><circle cx="10.3" cy="14" r="9.8" fill="url(#grmd)"/><text x="10.5" y="16.6" font-family="Liberation Sans" font-weight="bold" font-size="7.6" fill="#fff" text-anchor="middle" letter-spacing="-.3">Rmd</text></svg>
<div class="a" style="left:23px;top:377px;width:24px;height:24px;background:#d8dcdf;border:2px solid #1d2d3e;border-radius:6px;box-sizing:border-box"></div>
<svg class="a" style="left:71.5px;top:372px" width="31" height="30" viewBox="0 0 31 30"><path d="M5.5 0.5h16l8.5 8.5v20H5.5z" fill="#e4e4e4" stroke="#141a20" stroke-width="1"/><path d="M21.5 0.5v8.5h8.5" fill="#e8e8e8" stroke="#7d858e" stroke-width="1"/><circle cx="10.3" cy="14" r="9.8" fill="url(#grmd)"/><text x="10.5" y="16.6" font-family="Liberation Sans" font-weight="bold" font-size="7.6" fill="#fff" text-anchor="middle" letter-spacing="-.3">Rmd</text></svg>
<div class="a" style="left:23px;top:423px;width:24px;height:24px;background:#d8dcdf;border:2px solid #1d2d3e;border-radius:6px;box-sizing:border-box"></div>
<svg class="a" style="left:71.5px;top:418px" width="31" height="30" viewBox="0 0 31 30"><path d="M5.5 0.5h16l8.5 8.5v20H5.5z" fill="#e4e4e4" stroke="#141a20" stroke-width="1"/><path d="M21.5 0.5v8.5h8.5" fill="#e8e8e8" stroke="#7d858e" stroke-width="1"/><circle cx="10.3" cy="14" r="9.8" fill="url(#grmd)"/><text x="10.5" y="16.6" font-family="Liberation Sans" font-weight="bold" font-size="7.6" fill="#fff" text-anchor="middle" letter-spacing="-.3">Rmd</text></svg>
<div class="a" style="left:23px;top:469px;width:24px;height:24px;background:#d8dcdf;border:2px solid #1d2d3e;border-radius:6px;box-sizing:border-box"></div>
<svg class="a" style="left:71.5px;top:464px" width="31" height="30" viewBox="0 0 31 30"><path d="M5.5 0.5h16l8.5 8.5v20H5.5z" fill="#e4e4e4" stroke="#141a20" stroke-width="1"/><path d="M21.5 0.5v8.5h8.5" fill="#e8e8e8" stroke="#7d858e" stroke-width="1"/><circle cx="10.3" cy="14" r="9.8" fill="url(#grmd)"/><text x="10.5" y="16.6" font-family="Liberation Sans" font-weight="bold" font-size="7.6" fill="#fff" text-anchor="middle" letter-spacing="-.3">Rmd</text></svg>
<div class="a" style="left:23px;top:515px;width:24px;height:24px;background:#d8dcdf;border:2px solid #1d2d3e;border-radius:6px;box-sizing:border-box"></div>
<svg class="a" style="left:71.5px;top:510px" width="31" height="30" viewBox="0 0 31 30"><path d="M5.5 0.5h16l8.5 8.5v20H5.5z" fill="#e4e4e4" stroke="#141a20" stroke-width="1"/><path d="M21.5 0.5v8.5h8.5" fill="#e8e8e8" stroke="#7d858e" stroke-width="1"/><circle cx="10.3" cy="14" r="9.8" fill="url(#grmd)"/><text x="10.5" y="16.6" font-family="Liberation Sans" font-weight="bold" font-size="7.6" fill="#fff" text-anchor="middle" letter-spacing="-.3">Rmd</text></svg>
<div class="a" style="left:23px;top:561px;width:24px;height:24px;background:#d8dcdf;border:2px solid #1d2d3e;border-radius:6px;box-sizing:border-box"></div>
<svg class="a" style="left:71.5px;top:556px" width="31" height="30" viewBox="0 0 31 30"><path d="M5.5 0.5h16l8.5 8.5v20H5.5z" fill="#e4e4e4" stroke="#141a20" stroke-width="1"/><path d="M21.5 0.5v8.5h8.5" fill="#e8e8e8" stroke="#7d858e" stroke-width="1"/><circle cx="10.3" cy="14" r="9.8" fill="url(#grmd)"/><text x="10.5" y="16.6" font-family="Liberation Sans" font-weight="bold" font-size="7.6" fill="#fff" text-anchor="middle" letter-spacing="-.3">Rmd</text></svg>
<div class="a" style="left:23px;top:607px;width:24px;height:24px;background:#d8dcdf;border:2px solid #1d2d3e;border-radius:6px;box-sizing:border-box"></div>
<svg class="a" style="left:71.5px;top:602px" width="31" height="30" viewBox="0 0 31 30"><path d="M5.5 0.5h16l8.5 8.5v20H5.5z" fill="#e4e4e4" stroke="#141a20" stroke-width="1"/><path d="M21.5 0.5v8.5h8.5" fill="#e8e8e8" stroke="#7d858e" stroke-width="1"/><circle cx="10.3" cy="14" r="9.8" fill="url(#grmd)"/><text x="10.5" y="16.6" font-family="Liberation Sans" font-weight="bold" font-size="7.6" fill="#fff" text-anchor="middle" letter-spacing="-.3">Rmd</text></svg>
<div class="a" style="left:23px;top:653px;width:24px;height:24px;background:#d8dcdf;border:2px solid #1d2d3e;border-radius:6px;box-sizing:border-box"></div>
<svg class="a" style="left:71.5px;top:648px" width="31" height="30" viewBox="0 0 31 30"><path d="M5.5 0.5h16l8.5 8.5v20H5.5z" fill="#e4e4e4" stroke="#141a20" stroke-width="1"/><path d="M21.5 0.5v8.5h8.5" fill="#e8e8e8" stroke="#7d858e" stroke-width="1"/><circle cx="10.3" cy="14" r="9.8" fill="url(#grmd)"/><text x="10.5" y="16.6" font-family="Liberation Sans" font-weight="bold" font-size="7.6" fill="#fff" text-anchor="middle" letter-spacing="-.3">Rmd</text></svg>
<div class="a" style="left:23px;top:699px;width:24px;height:24px;background:#d8dcdf;border:2px solid #1d2d3e;border-radius:6px;box-sizing:border-box"></div>
<svg class="a" style="left:71.5px;top:694px" width="31" height="30" viewBox="0 0 31 30"><path d="M5.5 0.5h16l8.5 8.5v20H5.5z" fill="#e4e4e4" stroke="#141a20" stroke-width="1"/><path d="M21.5 0.5v8.5h8.5" fill="#e8e8e8" stroke="#7d858e" stroke-width="1"/><circle cx="10.3" cy="14" r="9.8" fill="url(#grmd)"/><text x="10.5" y="16.6" font-family="Liberation Sans" font-weight="bold" font-size="7.6" fill="#fff" text-anchor="middle" letter-spacing="-.3">Rmd</text></svg>
<div class="a" style="left:23px;top:745px;width:24px;height:24px;background:#d8dcdf;border:2px solid #1d2d3e;border-radius:6px;box-sizing:border-box"></div>
<svg class="a" style="left:71.5px;top:740px" width="31" height="30" viewBox="0 0 31 30"><path d="M5.5 0.5h16l8.5 8.5v20H5.5z" fill="#e4e4e4" stroke="#141a20" stroke-width="1"/><path d="M21.5 0.5v8.5h8.5" fill="#e8e8e8" stroke="#7d858e" stroke-width="1"/><circle cx="10.3" cy="14" r="9.8" fill="url(#grmd)"/><text x="10.5" y="16.6" font-family="Liberation Sans" font-weight="bold" font-size="7.6" fill="#fff" text-anchor="middle" letter-spacing="-.3">Rmd</text></svg>
<div class="a" style="left:23px;top:791px;width:24px;height:24px;background:#d8dcdf;border:2px solid #1d2d3e;border-radius:6px;box-sizing:border-box"></div>
<svg class="a" style="left:71.5px;top:786px" width="31" height="30" viewBox="0 0 31 30"><path d="M5.5 0.5h16l8.5 8.5v20H5.5z" fill="#e4e4e4" stroke="#141a20" stroke-width="1"/><path d="M21.5 0.5v8.5h8.5" fill="#e8e8e8" stroke="#7d858e" stroke-width="1"/><circle cx="10.3" cy="14" r="9.8" fill="url(#grmd)"/><text x="10.5" y="16.6" font-family="Liberation Sans" font-weight="bold" font-size="7.6" fill="#fff" text-anchor="middle" letter-spacing="-.3">Rmd</text></svg>
<div class="a" style="left:23px;top:837px;width:24px;height:24px;background:#d8dcdf;border:2px solid #1d2d3e;border-radius:6px;box-sizing:border-box"></div>
<svg class="a" style="left:71.5px;top:832px" width="31" height="30" viewBox="0 0 31 30"><path d="M5.5 0.5h16l8.5 8.5v20H5.5z" fill="#e4e4e4" stroke="#141a20" stroke-width="1"/><path d="M21.5 0.5v8.5h8.5" fill="#e8e8e8" stroke="#7d858e" stroke-width="1"/><circle cx="10.3" cy="14" r="9.8" fill="url(#grmd)"/><text x="10.5" y="16.6" font-family="Liberation Sans" font-weight="bold" font-size="7.6" fill="#fff" text-anchor="middle" letter-spacing="-.3">Rmd</text></svg>
<div class="a" style="left:23px;top:883px;width:24px;height:24px;background:#d8dcdf;border:2px solid #1d2d3e;border-radius:6px;box-sizing:border-box"></div>
<svg class="a" style="left:73px;top:880px" width="29" height="30" viewBox="0 0 30 30"><path d="M15 0.8L29 4.5v18L15 29.2 1 22.5v-18z" fill="#a3c6d8" stroke="#3fb0c8" stroke-width="1.3"/><path d="M15 0.8v28.4M1 4.5l14 4.5 14-4.5M1 22.5l14-4.5 14 4.5" stroke="#3fb0c8" stroke-width=".8" fill="none" opacity=".55"/><text x="15" y="18.6" font-family="Liberation Serif" font-size="16.5" fill="#1f4f9a" text-anchor="middle">R</text></svg>
</div>
<div class="t" style="left:1791.3px;top:881.0px;font-size:25px;color:#c5c4ec;letter-spacing:0.40px;">..</div>
<div class="t" style="left:1792.6px;top:927.0px;font-size:25px;color:#c5c4ec;letter-spacing:0.56px;">_book</div>
<div class="t" style="left:1792.6px;top:973.0px;font-size:25px;color:#c5c4ec;letter-spacing:0.56px;">_bookdown_files</div>
<div class="t" style="left:1792.6px;top:1019.0px;font-size:25px;color:#c5c4ec;letter-spacing:0.56px;">_bookdown.yml</div>
<div class="t" style="left:2358.0px;top:1019.0px;font-size:25px;color:#f8f8f2;letter-spacing:0.25px;">70 B</div>
<div class="t" style="left:2517.0px;top:1019.0px;font-size:25px;color:#f8f8f2;letter-spacing:0.92px;">Jul 25, 2022, 11:53 AM</div>
<div class="t" style="left:1792.6px;top:1065.0px;font-size:25px;color:#c5c4ec;letter-spacing:0.56px;">_output.yml</div>
<div class="t" style="left:2358.0px;top:1065.0px;font-size:25px;color:#f8f8f2;letter-spacing:0.25px;">297 B</div>
<div class="t" style="left:2517.0px;top:1065.0px;font-size:25px;color:#f8f8f2;letter-spacing:0.92px;">Jul 25, 2022, 11:46 AM</div>
<div class="t" style="left:1789.6px;top:1111.0px;font-size:25px;color:#c5c4ec;letter-spacing:0.56px;text-decoration:underline;text-underline-offset:3px;text-decoration-thickness:2px">.RData</div>
<div class="t" style="left:2358.0px;top:1111.0px;font-size:25px;color:#f8f8f2;letter-spacing:0.25px;">2.8 KB</div>
<div class="t" style="left:2517.0px;top:1111.0px;font-size:25px;color:#f8f8f2;letter-spacing:0.92px;">Aug 1, 2022, 2:18 PM</div>
<div class="t" style="left:1789.6px;top:1157.0px;font-size:25px;color:#c5c4ec;letter-spacing:0.56px;">.Rhistory</div>
<div class="t" style="left:2357.0px;top:1157.0px;font-size:25px;color:#f8f8f2;letter-spacing:0.25px;">19.7 KB</div>
<div class="t" style="left:2517.0px;top:1157.0px;font-size:25px;color:#f8f8f2;letter-spacing:0.92px;">Aug 20, 2022, 1:11 PM</div>
<div class="t" style="left:1790.6px;top:1203.0px;font-size:25px;color:#c5c4ec;letter-spacing:0.56px;">01–installation.Rmd</div>
<div class="t" style="left:2358.0px;top:1203.0px;font-size:25px;color:#f8f8f2;letter-spacing:0.25px;">2.3 KB</div>
<div class="t" style="left:2517.0px;top:1203.0px;font-size:25px;color:#f8f8f2;letter-spacing:0.92px;">Jul 23, 2022, 6:02 PM</div>
<div class="t" style="left:1790.6px;top:1249.0px;font-size:25px;color:#c5c4ec;letter-spacing:0.56px;">02–r–and–rmd.Rmd</div>
<div class="t" style="left:2358.0px;top:1249.0px;font-size:25px;color:#f8f8f2;letter-spacing:0.25px;">3.1 KB</div>
<div class="t" style="left:2517.0px;top:1249.0px;font-size:25px;color:#f8f8f2;letter-spacing:0.92px;">Aug 1, 2022, 11:33 AM</div>
<div class="t" style="left:1790.6px;top:1295.0px;font-size:25px;color:#c5c4ec;letter-spacing:0.56px;">03–loading–data.Rmd</div>
<div class="t" style="left:2357.0px;top:1295.0px;font-size:25px;color:#f8f8f2;letter-spacing:0.25px;">1.6 KB</div>
<div class="t" style="left:2517.0px;top:1295.0px;font-size:25px;color:#f8f8f2;letter-spacing:0.92px;">Jul 23, 2022, 6:19 PM</div>
<div class="t" style="left:1790.6px;top:1341.0px;font-size:25px;color:#c5c4ec;letter-spacing:0.56px;">04–data–wrangling.Rmd</div>
<div class="t" style="left:2357.0px;top:1341.0px;font-size:25px;color:#f8f8f2;letter-spacing:0.25px;">1.2 KB</div>
<div class="t" style="left:2517.0px;top:1341.0px;font-size:25px;color:#f8f8f2;letter-spacing:0.92px;">Jul 23, 2022, 6:33 PM</div>
<div class="t" style="left:1790.6px;top:1387.0px;font-size:25px;color:#c5c4ec;letter-spacing:0.56px;">05–data–wrangling–pplication.Rmd</div>
<div class="t" style="left:2358.0px;top:1387.0px;font-size:25px;color:#f8f8f2;letter-spacing:0.25px;">686 B</div>
<div class="t" style="left:2517.0px;top:1387.0px;font-size:25px;color:#f8f8f2;letter-spacing:0.92px;">Jul 24, 2022, 12:11 PM</div>
<div class="t" style="left:1790.6px;top:1433.0px;font-size:25px;color:#c5c4ec;letter-spacing:0.56px;">06–data–viz.Rmd</div>
<div class="t" style="left:2358.0px;top:1433.0px;font-size:25px;color:#f8f8f2;letter-spacing:0.25px;">2.1 KB</div>
<div class="t" style="left:2517.0px;top:1433.0px;font-size:25px;color:#f8f8f2;letter-spacing:0.92px;">Jul 24, 2022, 12:36 PM</div>
<div class="t" style="left:1790.6px;top:1479.0px;font-size:25px;color:#c5c4ec;letter-spacing:0.56px;">07–scatterplots.Rmd</div>
<div class="t" style="left:2357.0px;top:1479.0px;font-size:25px;color:#f8f8f2;letter-spacing:0.25px;">1.4 KB</div>
<div class="t" style="left:2517.0px;top:1479.0px;font-size:25px;color:#f8f8f2;letter-spacing:0.92px;">Jul 24, 2022, 12:50 PM</div>
<div class="t" style="left:1790.6px;top:1525.0px;font-size:25px;color:#c5c4ec;letter-spacing:0.56px;">08–real–data–intro.Rmd</div>
<div class="t" style="left:2357.0px;top:1525.0px;font-size:25px;color:#f8f8f2;letter-spacing:0.25px;">1.5 KB</div>
<div class="t" style="left:2517.0px;top:1525.0px;font-size:25px;color:#f8f8f2;letter-spacing:0.92px;">Jul 24, 2022, 2:00 PM</div>
<div class="t" style="left:1790.6px;top:1571.0px;font-size:25px;color:#c5c4ec;letter-spacing:0.56px;">09–pivot.Rmd</div>
<div class="t" style="left:2357.0px;top:1571.0px;font-size:25px;color:#f8f8f2;letter-spacing:0.25px;">1.3 KB</div>
<div class="t" style="left:2517.0px;top:1571.0px;font-size:25px;color:#f8f8f2;letter-spacing:0.92px;">Jul 24, 2022, 2:47 PM</div>
<div class="t" style="left:1789.6px;top:1617.0px;font-size:25px;color:#c5c4ec;letter-spacing:0.56px;">10–pipes.Rmd</div>
<div class="t" style="left:2357.0px;top:1617.0px;font-size:25px;color:#f8f8f2;letter-spacing:0.25px;">1.1 KB</div>
<div class="t" style="left:2517.0px;top:1617.0px;font-size:25px;color:#f8f8f2;letter-spacing:0.92px;">Aug 9, 2022, 9:11 AM</div>
<div class="t" style="left:1789.6px;top:1663.0px;font-size:25px;color:#c5c4ec;letter-spacing:0.56px;">11–pipe–app.Rmd</div>
<div class="t" style="left:2357.0px;top:1663.0px;font-size:25px;color:#f8f8f2;letter-spacing:0.25px;">1.9 KB</div>
<div class="t" style="left:2517.0px;top:1663.0px;font-size:25px;color:#f8f8f2;letter-spacing:0.92px;">Jul 25, 2022, 10:21 AM</div>
<div class="t" style="left:1789.6px;top:1709.0px;font-size:25px;color:#c5c4ec;letter-spacing:0.56px;">12–simulation.Rmd</div>
<div class="t" style="left:2358.0px;top:1709.0px;font-size:25px;color:#f8f8f2;letter-spacing:0.25px;">818 B</div>
<div class="t" style="left:2517.0px;top:1709.0px;font-size:25px;color:#f8f8f2;letter-spacing:0.92px;">Aug 9, 2022, 8:59 AM</div>
<div class="t" style="left:1789.6px;top:1755.0px;font-size:25px;color:#c5c4ec;letter-spacing:0.56px;">Book try.Rproj</div>
<div class="t" style="left:2358.0px;top:1755.0px;font-size:25px;color:#f8f8f2;letter-spacing:0.25px;">225 B</div>
<div class="t" style="left:2517.0px;top:1755.0px;font-size:25px;color:#f8f8f2;letter-spacing:0.92px;">Aug 20, 2022, 1:11 PM</div>
<div class="t" style="left:433.4px;top:7.1px;font-size:21.5px;color:#c3c8cd;letter-spacing:0.74px;">Go to file/function</div>
<div class="t" style="left:779.5px;top:5.5px;font-size:23px;color:#ffffff;letter-spacing:0.38px;">Addins</div>
<div class="t" style="left:2614.5px;top:6.2px;font-size:23px;color:#ffffff;letter-spacing:0.54px;">Book try — R stuff</div>
<div class="t" style="left:44.2px;top:66.4px;font-size:23px;color:#ffffff;letter-spacing:0.54px;">index.Rmd</div>
<div class="t" style="left:259.8px;top:66.4px;font-size:23px;color:#a6bde6;letter-spacing:0.79px;">01–installation.Rmd*</div>
<div class="t" style="left:245.0px;top:112.4px;font-size:23px;color:#ffffff;letter-spacing:0.09px;">Knit on Save</div>
<div class="t" style="left:564.0px;top:112.0px;font-size:23px;color:#ffffff;letter-spacing:0.67px;">Knit</div>
<div class="t" style="left:1483.0px;top:111.7px;font-size:23px;color:#ffffff;letter-spacing:0.00px;">Run</div>
<div class="t" style="left:15.6px;top:155.6px;font-size:23px;color:#ffffff;letter-spacing:-0.24px;">Source</div>
<div class="t" style="left:127.6px;top:155.6px;font-size:23px;color:#ffffff;letter-spacing:0.16px;">Visual</div>
<div class="t" style="left:1544.0px;top:156.2px;font-size:23px;color:#ffffff;letter-spacing:0.67px;">Outline</div>
<div class="t" style="left:19.8px;top:1020.2px;font-size:23px;color:#ffffff;letter-spacing:0.53px;">46:1</div>
<div class="t" style="left:142.4px;top:1020.2px;font-size:23px;color:#ffffff;letter-spacing:0.57px;">Task 1: Getting R on your computer</div>
<div class="t" style="left:1486.7px;top:1020.2px;font-size:23px;color:#ffffff;letter-spacing:0.46px;">R Markdown</div>
<div class="t" style="left:5.4px;top:1074.0px;font-size:23px;color:#ffffff;letter-spacing:0.22px;">Console</div>
<div class="t" style="left:130.0px;top:1074.0px;font-size:23px;color:#ffffff;letter-spacing:0.91px;">Terminal</div>
<div class="t" style="left:288.7px;top:1074.0px;font-size:23px;color:#ffffff;letter-spacing:0.10px;">Render</div>
<div class="t" style="left:428.8px;top:1074.0px;font-size:23px;color:#ffffff;letter-spacing:0.44px;">Deploy</div>
<div class="t" style="left:565.0px;top:1074.0px;font-size:23px;color:#ffffff;letter-spacing:0.33px;">Background Jobs</div>
<div class="t" style="left:61.5px;top:1120.2px;font-size:24px;color:#ffffff;letter-spacing:0.92px;">R 4.2.0</div>
<div class="t" style="left:177.6px;top:1120.2px;font-size:24px;color:#ffffff;letter-spacing:0.76px;">~/Desktop/R stuff/book/Book try/</div>
<div class="t" style="left:1690.9px;top:66.4px;font-size:23px;color:#ffffff;letter-spacing:0.51px;">Environment</div>
<div class="t" style="left:1864.3px;top:66.4px;font-size:23px;color:#ffffff;letter-spacing:0.78px;">History</div>
<div class="t" style="left:1979.1px;top:66.4px;font-size:23px;color:#ffffff;letter-spacing:0.44px;">Connections</div>
<div class="t" style="left:2150.0px;top:66.4px;font-size:23px;color:#ffffff;letter-spacing:0.92px;">Build</div>
<div class="t" style="left:2244.5px;top:66.4px;font-size:23px;color:#ffffff;letter-spacing:0.87px;">Tutorial</div>
<div class="t" style="left:1838.6px;top:112.3px;font-size:23px;color:#ffffff;letter-spacing:0.65px;">Import Dataset</div>
<div class="t" style="left:2090.5px;top:112.3px;font-size:23px;color:#ffffff;letter-spacing:0.38px;">207 MiB</div>
<div class="t" style="left:2673.4px;top:112.3px;font-size:23px;color:#ffffff;letter-spacing:0.93px;">Grid</div>
<div class="t" style="left:1687.8px;top:154.7px;font-size:23px;color:#ffffff;letter-spacing:0.00px;">R</div>
<div class="t" style="left:1801.5px;top:154.7px;font-size:23px;color:#ffffff;letter-spacing:0.38px;">Global Environment</div>
<div class="t" style="left:1718.2px;top:198.3px;font-size:23px;color:#ffffff;letter-spacing:-0.07px;">Name</div>
<div class="t" style="left:1956.5px;top:198.3px;font-size:23px;color:#ffffff;letter-spacing:0.10px;">Type</div>
<div class="t" style="left:2132.6px;top:198.3px;font-size:23px;color:#ffffff;letter-spacing:0.82px;">Length</div>
<div class="t" style="left:2248.6px;top:198.3px;font-size:23px;color:#ffffff;letter-spacing:-0.33px;">Size</div>
<div class="t" style="left:2390.0px;top:198.3px;font-size:23px;color:#ffffff;letter-spacing:0.48px;">Value</div>
<div class="t" style="left:2137.9px;top:311.0px;font-size:22px;color:#f8f8f2;letter-spacing:0.85px;">Environment is empty</div>
<div class="t" style="left:1690.3px;top:710.4px;font-size:23px;color:#ffffff;letter-spacing:-0.15px;">Files</div>
<div class="t" style="left:1776.3px;top:710.4px;font-size:23px;color:#ffffff;letter-spacing:-0.10px;">Plots</div>
<div class="t" style="left:1866.8px;top:710.4px;font-size:23px;color:#ffffff;letter-spacing:-0.49px;">Packages</div>
<div class="t" style="left:2002.3px;top:710.4px;font-size:23px;color:#ffffff;letter-spacing:0.63px;">Help</div>
<div class="t" style="left:2092.3px;top:710.4px;font-size:23px;color:#ffffff;letter-spacing:-0.06px;">Viewer</div>
<div class="t" style="left:2200.7px;top:710.4px;font-size:23px;color:#ffffff;letter-spacing:0.38px;">Presentation</div>
<div class="t" style="left:1729.0px;top:756.0px;font-size:23px;color:#ffffff;letter-spacing:0.11px;">New Folder</div>
<div class="t" style="left:1924.6px;top:756.0px;font-size:23px;color:#ffffff;letter-spacing:0.02px;">New Blank File</div>
<div class="t" style="left:2176.7px;top:756.0px;font-size:23px;color:#ffffff;letter-spacing:0.24px;">Delete</div>
<div class="t" style="left:2309.0px;top:756.5px;font-size:23px;color:#ffffff;letter-spacing:-0.20px;">Rename</div>
<div class="t" style="left:2472.3px;top:756.5px;font-size:23px;color:#ffffff;letter-spacing:0.70px;">More</div>
<div class="t" style="left:1770.0px;top:800.1px;font-size:23px;color:#b3c7e6;letter-spacing:0.47px;">Home</div>
<div class="t" style="left:1868.5px;top:800.1px;font-size:23px;color:#b3c7e6;letter-spacing:0.75px;">Desktop</div>
<div class="t" style="left:1992.3px;top:800.1px;font-size:23px;color:#b3c7e6;letter-spacing:0.68px;">R stuff</div>
<div class="t" style="left:2098.0px;top:800.1px;font-size:23px;color:#b3c7e6;letter-spacing:0.53px;">book</div>
<div class="t" style="left:2184.2px;top:800.1px;font-size:23px;color:#b3c7e6;letter-spacing:0.69px;">Book try</div>
<div class="t" style="left:1822.4px;top:838.3px;font-size:23px;color:#ffffff;letter-spacing:-0.13px;">Name</div>
<div class="t" style="left:2355.3px;top:838.1px;font-size:23px;color:#ffffff;letter-spacing:-0.70px;">Size</div>
<div class="t" style="left:2514.3px;top:838.1px;font-size:23px;color:#ffffff;letter-spacing:0.90px;">Modified</div>
<div class="a" style="left:1851px;top:1163px;width:80px;height:34px;background:#666666;border:1.5px solid #141414;box-sizing:border-box;border-radius:2px"></div>
<div class="t" style="left:1855.3px;top:1159.5px;font-size:21px;color:#e6e6e6;letter-spacing:0.54px;">.RData</div>
<div class="a" style="left:1672px;top:1784px;width:1162px;height:2px;background:#0b1a2a;"></div>
<div class="a" style="left:0px;top:1786px;width:2840px;height:14px;background:#304b64;"></div>
</body></html>
